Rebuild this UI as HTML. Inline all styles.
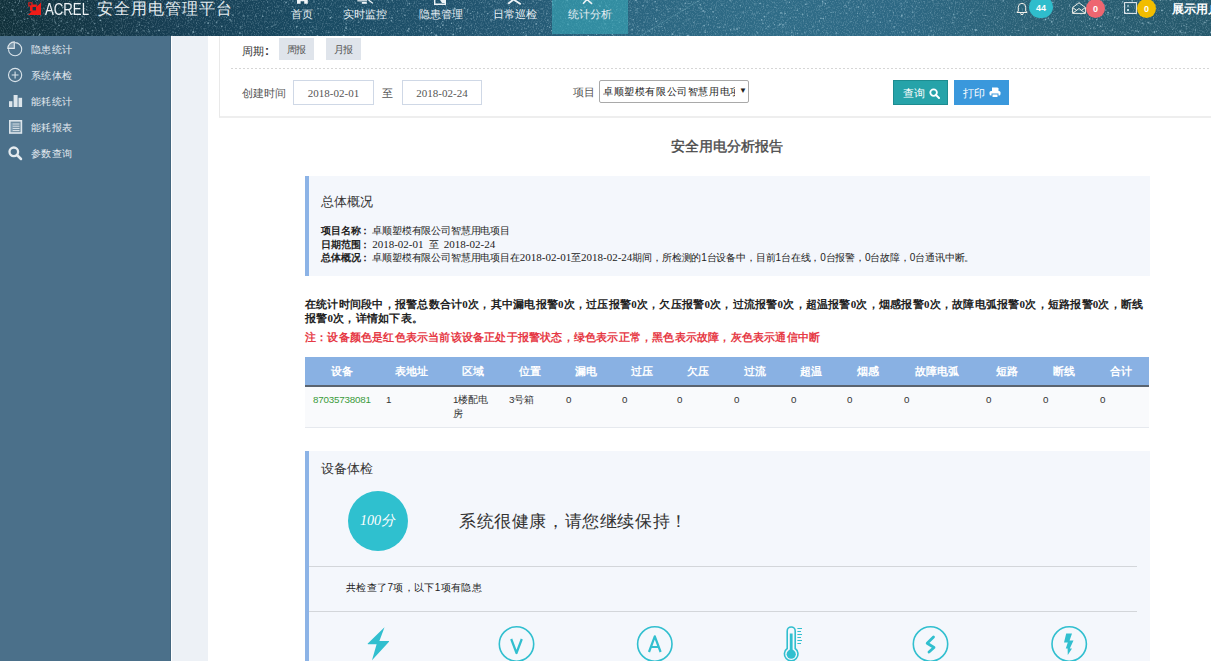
<!DOCTYPE html>
<html><head><meta charset="utf-8">
<style>
*{margin:0;padding:0;box-sizing:border-box}
html,body{width:1211px;height:661px;overflow:hidden;background:#fff;font-family:"Liberation Sans",sans-serif;color:#333}
.abs{position:absolute}
#hdr{position:absolute;z-index:5;left:0;top:0;width:1211px;height:36px;overflow:hidden;
 background:linear-gradient(90deg,#10303a 0px,#133645 80px,#163d52 165px,#194a62 315px,#21546f 475px,#2b6681 650px,#2f6c87 780px,#2d6884 900px,#295f74 1040px,#25586b 1211px)}
#side{position:absolute;left:0;top:36px;width:171px;height:625px;background:#4b708a;border-right:1px solid #44677f}
#gap{position:absolute;left:172px;top:36px;width:36px;height:625px;background:#edf1f6}
.nav{position:absolute;top:7px;font-size:11px;color:#e6eef3;white-space:nowrap;line-height:14px}
.sitem{position:absolute;left:31px;font-size:10px;letter-spacing:0.45px;color:#e3eaf0;line-height:14px;white-space:nowrap}
.sico{position:absolute;left:8px}
.t{position:absolute;white-space:nowrap}
.dg{font-family:"Liberation Serif",serif;font-size:11px;letter-spacing:0}
</style></head><body>
<div id="hdr">
  <svg class="abs" style="left:0;top:0" width="1211" height="36"><filter id="nz" x="0" y="0" width="100%" height="100%"><feTurbulence type="fractalNoise" baseFrequency="0.9 0.6" numOctaves="2" seed="3"/><feColorMatrix values="0 0 0 0 0.75  0 0 0 0 0.88  0 0 0 0 0.95  0 0 0 1.6 -0.75"/></filter><rect width="1211" height="36" filter="url(#nz)" opacity="0.4"/><g fill="#c6e6f2"><circle cx="547.8" cy="20.2" r="0.9" fill-opacity="0.35"/><circle cx="1035.5" cy="6.8" r="0.9" fill-opacity="0.43"/><circle cx="960.3" cy="3.4" r="0.6" fill-opacity="0.21"/><circle cx="652.4" cy="32.1" r="0.4" fill-opacity="0.42"/><circle cx="479.7" cy="16.3" r="0.5" fill-opacity="0.43"/><circle cx="1007.2" cy="2.3" r="0.4" fill-opacity="0.24"/><circle cx="293.0" cy="1.1" r="0.9" fill-opacity="0.30"/><circle cx="715.7" cy="7.0" r="0.6" fill-opacity="0.44"/><circle cx="605.2" cy="23.8" r="0.9" fill-opacity="0.44"/><circle cx="492.6" cy="19.8" r="0.5" fill-opacity="0.47"/><circle cx="381.8" cy="8.3" r="0.6" fill-opacity="0.16"/><circle cx="682.0" cy="3.9" r="0.5" fill-opacity="0.53"/><circle cx="468.1" cy="34.5" r="0.4" fill-opacity="0.25"/><circle cx="1122.6" cy="1.9" r="0.8" fill-opacity="0.59"/><circle cx="481.3" cy="2.6" r="0.6" fill-opacity="0.50"/><circle cx="326.7" cy="3.1" r="0.7" fill-opacity="0.16"/><circle cx="496.6" cy="33.2" r="0.5" fill-opacity="0.26"/><circle cx="122.4" cy="2.2" r="0.9" fill-opacity="0.23"/><circle cx="677.3" cy="16.1" r="0.6" fill-opacity="0.59"/><circle cx="931.9" cy="15.1" r="0.8" fill-opacity="0.20"/><circle cx="509.5" cy="7.7" r="0.6" fill-opacity="0.54"/><circle cx="1180.6" cy="21.3" r="0.4" fill-opacity="0.24"/><circle cx="477.5" cy="30.8" r="0.5" fill-opacity="0.17"/><circle cx="177.2" cy="15.9" r="0.4" fill-opacity="0.50"/><circle cx="398.4" cy="10.7" r="0.5" fill-opacity="0.18"/><circle cx="252.8" cy="22.9" r="0.4" fill-opacity="0.42"/><circle cx="450.1" cy="16.3" r="0.9" fill-opacity="0.52"/><circle cx="164.4" cy="13.9" r="0.5" fill-opacity="0.29"/><circle cx="276.6" cy="22.0" r="0.6" fill-opacity="0.22"/><circle cx="761.7" cy="19.9" r="0.8" fill-opacity="0.55"/><circle cx="730.9" cy="15.2" r="0.5" fill-opacity="0.20"/><circle cx="620.5" cy="9.2" r="0.8" fill-opacity="0.27"/><circle cx="997.5" cy="21.5" r="0.6" fill-opacity="0.38"/><circle cx="1125.3" cy="35.2" r="0.5" fill-opacity="0.25"/><circle cx="677.4" cy="30.7" r="0.5" fill-opacity="0.28"/><circle cx="1110.9" cy="7.3" r="0.4" fill-opacity="0.18"/><circle cx="498.2" cy="9.0" r="0.4" fill-opacity="0.23"/><circle cx="446.6" cy="20.6" r="0.5" fill-opacity="0.19"/><circle cx="167.6" cy="16.2" r="0.7" fill-opacity="0.45"/><circle cx="837.1" cy="21.0" r="0.5" fill-opacity="0.42"/><circle cx="1118.5" cy="17.1" r="0.7" fill-opacity="0.47"/><circle cx="1165.9" cy="0.8" r="0.5" fill-opacity="0.37"/><circle cx="884.6" cy="11.5" r="0.5" fill-opacity="0.18"/><circle cx="661.3" cy="26.5" r="0.5" fill-opacity="0.51"/><circle cx="1108.1" cy="12.7" r="0.9" fill-opacity="0.56"/><circle cx="1054.9" cy="15.0" r="0.4" fill-opacity="0.54"/><circle cx="693.7" cy="22.5" r="0.8" fill-opacity="0.32"/><circle cx="15.1" cy="2.6" r="0.5" fill-opacity="0.44"/><circle cx="1202.9" cy="31.7" r="0.7" fill-opacity="0.32"/><circle cx="890.1" cy="20.9" r="0.9" fill-opacity="0.36"/><circle cx="655.5" cy="18.7" r="0.4" fill-opacity="0.29"/><circle cx="106.2" cy="0.8" r="0.5" fill-opacity="0.37"/><circle cx="744.2" cy="33.1" r="0.6" fill-opacity="0.55"/><circle cx="445.6" cy="5.2" r="0.6" fill-opacity="0.38"/><circle cx="912.8" cy="12.3" r="0.9" fill-opacity="0.37"/><circle cx="292.4" cy="14.6" r="0.6" fill-opacity="0.24"/><circle cx="521.8" cy="29.0" r="0.6" fill-opacity="0.55"/><circle cx="465.5" cy="21.0" r="0.7" fill-opacity="0.24"/><circle cx="162.9" cy="12.6" r="0.4" fill-opacity="0.47"/><circle cx="1150.5" cy="10.0" r="0.5" fill-opacity="0.20"/><circle cx="570.8" cy="33.3" r="0.8" fill-opacity="0.32"/><circle cx="629.7" cy="24.2" r="0.9" fill-opacity="0.29"/><circle cx="1003.6" cy="10.0" r="0.4" fill-opacity="0.46"/><circle cx="340.4" cy="12.8" r="0.4" fill-opacity="0.44"/><circle cx="490.7" cy="6.8" r="0.6" fill-opacity="0.26"/><circle cx="170.6" cy="1.7" r="0.5" fill-opacity="0.35"/><circle cx="762.9" cy="23.6" r="0.7" fill-opacity="0.58"/><circle cx="828.9" cy="7.2" r="0.9" fill-opacity="0.27"/><circle cx="864.9" cy="27.2" r="0.4" fill-opacity="0.23"/><circle cx="329.8" cy="12.4" r="0.5" fill-opacity="0.33"/><circle cx="959.0" cy="32.6" r="0.5" fill-opacity="0.33"/><circle cx="1081.0" cy="14.0" r="0.9" fill-opacity="0.35"/><circle cx="757.5" cy="32.8" r="0.8" fill-opacity="0.40"/><circle cx="790.4" cy="18.1" r="0.7" fill-opacity="0.36"/><circle cx="788.8" cy="7.4" r="0.5" fill-opacity="0.25"/><circle cx="1089.9" cy="35.3" r="0.6" fill-opacity="0.39"/><circle cx="957.6" cy="11.5" r="0.4" fill-opacity="0.31"/><circle cx="100.2" cy="15.9" r="0.8" fill-opacity="0.50"/><circle cx="590.3" cy="1.0" r="0.5" fill-opacity="0.34"/><circle cx="42.5" cy="19.2" r="0.5" fill-opacity="0.36"/><circle cx="1210.8" cy="32.4" r="0.9" fill-opacity="0.58"/><circle cx="596.5" cy="34.2" r="0.5" fill-opacity="0.49"/><circle cx="532.1" cy="20.1" r="0.5" fill-opacity="0.39"/><circle cx="1021.6" cy="20.2" r="0.6" fill-opacity="0.45"/><circle cx="1156.2" cy="31.3" r="0.6" fill-opacity="0.29"/><circle cx="170.9" cy="19.6" r="0.6" fill-opacity="0.41"/><circle cx="243.4" cy="19.3" r="0.4" fill-opacity="0.42"/><circle cx="33.6" cy="34.9" r="0.8" fill-opacity="0.39"/><circle cx="1198.2" cy="4.4" r="0.5" fill-opacity="0.46"/><circle cx="79.8" cy="19.4" r="0.8" fill-opacity="0.56"/><circle cx="969.3" cy="14.5" r="0.6" fill-opacity="0.36"/><circle cx="153.8" cy="15.6" r="0.9" fill-opacity="0.39"/><circle cx="131.5" cy="15.1" r="0.4" fill-opacity="0.57"/><circle cx="156.8" cy="28.1" r="0.4" fill-opacity="0.17"/><circle cx="188.3" cy="0.4" r="0.6" fill-opacity="0.29"/><circle cx="430.3" cy="22.3" r="0.5" fill-opacity="0.37"/><circle cx="705.1" cy="30.7" r="0.6" fill-opacity="0.47"/><circle cx="849.4" cy="31.6" r="0.4" fill-opacity="0.32"/><circle cx="500.6" cy="19.1" r="0.5" fill-opacity="0.39"/><circle cx="1046.1" cy="19.2" r="0.6" fill-opacity="0.39"/><circle cx="1030.9" cy="22.0" r="0.5" fill-opacity="0.25"/><circle cx="897.1" cy="29.2" r="0.5" fill-opacity="0.29"/><circle cx="381.5" cy="33.2" r="0.6" fill-opacity="0.50"/><circle cx="235.6" cy="3.5" r="0.6" fill-opacity="0.21"/><circle cx="106.7" cy="14.0" r="0.8" fill-opacity="0.52"/><circle cx="510.6" cy="28.4" r="0.5" fill-opacity="0.24"/><circle cx="760.5" cy="28.8" r="0.5" fill-opacity="0.24"/><circle cx="826.4" cy="32.8" r="0.7" fill-opacity="0.20"/><circle cx="612.4" cy="27.3" r="0.6" fill-opacity="0.51"/><circle cx="583.8" cy="0.9" r="0.9" fill-opacity="0.22"/><circle cx="223.5" cy="7.3" r="0.5" fill-opacity="0.60"/><circle cx="1122.5" cy="3.4" r="0.4" fill-opacity="0.21"/><circle cx="824.6" cy="2.8" r="0.5" fill-opacity="0.30"/><circle cx="565.5" cy="18.6" r="0.8" fill-opacity="0.24"/><circle cx="451.9" cy="22.8" r="0.4" fill-opacity="0.53"/><circle cx="219.5" cy="16.3" r="0.7" fill-opacity="0.33"/><circle cx="236.3" cy="5.9" r="0.4" fill-opacity="0.30"/><circle cx="102.7" cy="30.3" r="0.8" fill-opacity="0.41"/><circle cx="231.2" cy="21.0" r="0.7" fill-opacity="0.51"/><circle cx="312.8" cy="32.8" r="0.5" fill-opacity="0.52"/><circle cx="491.2" cy="32.3" r="0.7" fill-opacity="0.50"/><circle cx="926.7" cy="14.6" r="0.5" fill-opacity="0.18"/><circle cx="413.8" cy="16.9" r="0.4" fill-opacity="0.55"/><circle cx="1199.6" cy="32.5" r="0.4" fill-opacity="0.25"/><circle cx="1144.0" cy="24.0" r="0.7" fill-opacity="0.25"/><circle cx="491.8" cy="6.6" r="0.5" fill-opacity="0.33"/><circle cx="1210.9" cy="23.1" r="0.5" fill-opacity="0.49"/><circle cx="1186.9" cy="0.8" r="0.5" fill-opacity="0.48"/><circle cx="310.8" cy="14.5" r="0.4" fill-opacity="0.49"/><circle cx="784.7" cy="0.4" r="0.6" fill-opacity="0.26"/><circle cx="1096.7" cy="19.8" r="0.8" fill-opacity="0.59"/><circle cx="687.8" cy="35.8" r="0.9" fill-opacity="0.51"/><circle cx="92.3" cy="21.5" r="0.4" fill-opacity="0.32"/><circle cx="1136.6" cy="13.9" r="0.5" fill-opacity="0.54"/><circle cx="656.3" cy="21.5" r="0.8" fill-opacity="0.58"/><circle cx="509.5" cy="19.0" r="0.6" fill-opacity="0.31"/><circle cx="346.0" cy="23.6" r="0.6" fill-opacity="0.45"/><circle cx="905.5" cy="1.0" r="0.6" fill-opacity="0.41"/><circle cx="766.6" cy="14.7" r="0.8" fill-opacity="0.17"/><circle cx="381.6" cy="14.3" r="0.7" fill-opacity="0.18"/><circle cx="1096.6" cy="15.5" r="0.9" fill-opacity="0.26"/><circle cx="914.9" cy="1.6" r="0.5" fill-opacity="0.57"/><circle cx="875.2" cy="16.9" r="0.6" fill-opacity="0.42"/><circle cx="139.4" cy="22.5" r="0.9" fill-opacity="0.20"/><circle cx="1042.8" cy="12.8" r="0.5" fill-opacity="0.21"/><circle cx="536.3" cy="24.0" r="0.9" fill-opacity="0.42"/><circle cx="774.5" cy="24.6" r="0.7" fill-opacity="0.50"/><circle cx="642.8" cy="35.9" r="0.6" fill-opacity="0.48"/><circle cx="288.7" cy="4.1" r="0.6" fill-opacity="0.50"/><circle cx="756.8" cy="12.9" r="0.6" fill-opacity="0.42"/><circle cx="878.1" cy="25.2" r="0.6" fill-opacity="0.43"/><circle cx="912.3" cy="6.8" r="0.6" fill-opacity="0.38"/><circle cx="790.7" cy="7.1" r="0.4" fill-opacity="0.43"/><circle cx="11.5" cy="9.3" r="0.4" fill-opacity="0.43"/><circle cx="124.1" cy="19.5" r="0.5" fill-opacity="0.49"/><circle cx="1105.5" cy="5.8" r="0.6" fill-opacity="0.43"/><circle cx="451.9" cy="17.2" r="0.6" fill-opacity="0.30"/><circle cx="598.7" cy="4.8" r="0.5" fill-opacity="0.51"/><circle cx="541.7" cy="29.6" r="0.6" fill-opacity="0.35"/><circle cx="905.0" cy="14.0" r="0.5" fill-opacity="0.32"/><circle cx="791.6" cy="35.6" r="0.7" fill-opacity="0.28"/><circle cx="919.1" cy="29.7" r="0.5" fill-opacity="0.34"/><circle cx="447.2" cy="3.5" r="0.7" fill-opacity="0.19"/><circle cx="100.5" cy="20.3" r="0.9" fill-opacity="0.52"/><circle cx="561.3" cy="29.6" r="0.4" fill-opacity="0.18"/><circle cx="258.3" cy="23.8" r="0.5" fill-opacity="0.46"/><circle cx="599.2" cy="27.5" r="0.7" fill-opacity="0.28"/><circle cx="173.1" cy="12.9" r="0.7" fill-opacity="0.31"/><circle cx="142.1" cy="25.5" r="0.6" fill-opacity="0.35"/><circle cx="972.5" cy="11.0" r="0.7" fill-opacity="0.25"/><circle cx="1172.0" cy="26.3" r="0.6" fill-opacity="0.19"/><circle cx="1003.3" cy="0.9" r="0.8" fill-opacity="0.41"/><circle cx="964.1" cy="26.6" r="0.7" fill-opacity="0.51"/><circle cx="654.6" cy="30.1" r="0.5" fill-opacity="0.23"/><circle cx="919.1" cy="31.7" r="0.6" fill-opacity="0.52"/><circle cx="267.9" cy="2.1" r="0.5" fill-opacity="0.41"/><circle cx="1170.3" cy="23.4" r="0.8" fill-opacity="0.18"/><circle cx="662.2" cy="28.4" r="0.5" fill-opacity="0.30"/><circle cx="331.4" cy="3.8" r="0.7" fill-opacity="0.19"/><circle cx="767.9" cy="5.2" r="0.8" fill-opacity="0.26"/><circle cx="267.0" cy="27.6" r="0.7" fill-opacity="0.49"/><circle cx="477.6" cy="12.2" r="0.7" fill-opacity="0.45"/><circle cx="597.8" cy="19.3" r="0.5" fill-opacity="0.47"/><circle cx="1108.0" cy="14.8" r="0.7" fill-opacity="0.53"/><circle cx="976.0" cy="30.0" r="0.9" fill-opacity="0.58"/><circle cx="775.4" cy="18.9" r="0.4" fill-opacity="0.51"/><circle cx="510.6" cy="15.1" r="0.5" fill-opacity="0.26"/><circle cx="196.5" cy="22.9" r="0.5" fill-opacity="0.29"/><circle cx="471.5" cy="19.0" r="0.6" fill-opacity="0.59"/><circle cx="71.7" cy="11.1" r="0.5" fill-opacity="0.29"/><circle cx="188.3" cy="33.1" r="0.4" fill-opacity="0.49"/><circle cx="20.8" cy="17.3" r="0.4" fill-opacity="0.29"/><circle cx="239.3" cy="12.9" r="0.6" fill-opacity="0.42"/><circle cx="571.5" cy="18.3" r="0.9" fill-opacity="0.23"/><circle cx="340.4" cy="6.2" r="0.6" fill-opacity="0.43"/><circle cx="1140.8" cy="19.8" r="0.6" fill-opacity="0.37"/><circle cx="487.6" cy="34.4" r="0.5" fill-opacity="0.37"/><circle cx="267.6" cy="1.8" r="0.5" fill-opacity="0.51"/><circle cx="466.2" cy="19.0" r="0.6" fill-opacity="0.50"/><circle cx="70.2" cy="33.3" r="0.4" fill-opacity="0.54"/><circle cx="1096.2" cy="16.2" r="0.6" fill-opacity="0.47"/><circle cx="734.0" cy="5.7" r="0.5" fill-opacity="0.50"/><circle cx="175.3" cy="32.7" r="0.5" fill-opacity="0.44"/><circle cx="1202.7" cy="9.6" r="0.4" fill-opacity="0.22"/><circle cx="932.9" cy="0.0" r="0.5" fill-opacity="0.52"/><circle cx="99.8" cy="9.7" r="0.5" fill-opacity="0.55"/><circle cx="840.1" cy="3.0" r="0.6" fill-opacity="0.16"/><circle cx="227.4" cy="7.0" r="0.5" fill-opacity="0.50"/><circle cx="533.1" cy="1.3" r="0.8" fill-opacity="0.39"/><circle cx="190.8" cy="30.0" r="0.6" fill-opacity="0.29"/><circle cx="491.0" cy="20.0" r="0.9" fill-opacity="0.45"/><circle cx="81.2" cy="2.7" r="0.5" fill-opacity="0.20"/><circle cx="477.4" cy="16.6" r="0.5" fill-opacity="0.44"/><circle cx="15.0" cy="13.6" r="0.9" fill-opacity="0.26"/><circle cx="683.1" cy="16.5" r="0.4" fill-opacity="0.54"/><circle cx="1022.7" cy="25.9" r="0.5" fill-opacity="0.28"/><circle cx="455.3" cy="19.4" r="0.6" fill-opacity="0.58"/><circle cx="914.2" cy="20.0" r="0.5" fill-opacity="0.27"/><circle cx="242.1" cy="26.3" r="0.7" fill-opacity="0.29"/><circle cx="331.6" cy="16.9" r="0.7" fill-opacity="0.35"/><circle cx="463.1" cy="3.7" r="0.5" fill-opacity="0.21"/><circle cx="763.4" cy="6.5" r="0.6" fill-opacity="0.33"/><circle cx="1013.5" cy="21.3" r="0.5" fill-opacity="0.20"/><circle cx="39.2" cy="35.5" r="0.8" fill-opacity="0.33"/><circle cx="88.0" cy="33.1" r="0.8" fill-opacity="0.57"/><circle cx="168.4" cy="7.4" r="0.5" fill-opacity="0.52"/><circle cx="467.4" cy="11.9" r="0.8" fill-opacity="0.43"/><circle cx="880.3" cy="22.1" r="0.7" fill-opacity="0.59"/><circle cx="956.3" cy="23.8" r="0.4" fill-opacity="0.27"/><circle cx="228.6" cy="11.0" r="0.9" fill-opacity="0.20"/><circle cx="457.3" cy="18.3" r="0.6" fill-opacity="0.52"/><circle cx="740.5" cy="5.7" r="0.6" fill-opacity="0.40"/><circle cx="427.0" cy="18.0" r="0.5" fill-opacity="0.41"/><circle cx="240.0" cy="33.6" r="0.6" fill-opacity="0.41"/><circle cx="32.3" cy="23.7" r="0.5" fill-opacity="0.21"/><circle cx="578.7" cy="15.0" r="0.7" fill-opacity="0.30"/><circle cx="1125.1" cy="13.0" r="0.9" fill-opacity="0.55"/><circle cx="547.7" cy="26.3" r="0.6" fill-opacity="0.56"/><circle cx="658.1" cy="20.2" r="0.6" fill-opacity="0.23"/><circle cx="903.1" cy="32.3" r="0.7" fill-opacity="0.42"/><circle cx="148.5" cy="29.7" r="0.6" fill-opacity="0.46"/><circle cx="440.4" cy="27.3" r="0.7" fill-opacity="0.52"/><circle cx="224.7" cy="19.7" r="0.5" fill-opacity="0.35"/><circle cx="488.5" cy="28.2" r="0.5" fill-opacity="0.29"/><circle cx="812.9" cy="26.6" r="0.8" fill-opacity="0.43"/><circle cx="775.4" cy="27.5" r="0.5" fill-opacity="0.24"/><circle cx="566.8" cy="5.1" r="0.8" fill-opacity="0.20"/><circle cx="491.3" cy="12.1" r="0.5" fill-opacity="0.27"/><circle cx="687.9" cy="12.0" r="0.4" fill-opacity="0.47"/><circle cx="953.7" cy="14.5" r="0.9" fill-opacity="0.42"/><circle cx="569.1" cy="14.8" r="0.8" fill-opacity="0.49"/><circle cx="588.3" cy="35.8" r="0.8" fill-opacity="0.52"/><circle cx="142.1" cy="4.1" r="0.7" fill-opacity="0.39"/><circle cx="523.4" cy="32.6" r="0.7" fill-opacity="0.56"/><circle cx="358.5" cy="22.2" r="0.8" fill-opacity="0.48"/><circle cx="723.6" cy="27.1" r="0.6" fill-opacity="0.55"/><circle cx="1062.1" cy="8.8" r="0.9" fill-opacity="0.26"/><circle cx="1057.3" cy="35.0" r="0.9" fill-opacity="0.46"/><circle cx="637.3" cy="8.6" r="0.6" fill-opacity="0.45"/><circle cx="1138.6" cy="31.7" r="0.7" fill-opacity="0.54"/><circle cx="510.3" cy="29.0" r="0.6" fill-opacity="0.44"/><circle cx="510.5" cy="4.4" r="0.5" fill-opacity="0.19"/><circle cx="959.5" cy="4.5" r="0.9" fill-opacity="0.15"/><circle cx="295.4" cy="10.8" r="0.7" fill-opacity="0.23"/><circle cx="533.8" cy="16.2" r="0.8" fill-opacity="0.21"/><circle cx="838.3" cy="8.3" r="0.6" fill-opacity="0.16"/><circle cx="1088.1" cy="11.1" r="0.9" fill-opacity="0.21"/><circle cx="940.5" cy="28.0" r="0.6" fill-opacity="0.24"/><circle cx="1040.3" cy="24.9" r="0.4" fill-opacity="0.24"/><circle cx="1014.7" cy="12.7" r="0.9" fill-opacity="0.16"/><circle cx="769.4" cy="25.1" r="0.6" fill-opacity="0.39"/><circle cx="286.1" cy="34.2" r="0.4" fill-opacity="0.44"/><circle cx="370.7" cy="29.4" r="0.6" fill-opacity="0.54"/><circle cx="863.6" cy="4.9" r="0.9" fill-opacity="0.34"/><circle cx="205.1" cy="31.0" r="0.5" fill-opacity="0.47"/><circle cx="237.9" cy="6.5" r="0.6" fill-opacity="0.38"/><circle cx="357.8" cy="9.8" r="0.5" fill-opacity="0.42"/><circle cx="277.3" cy="10.8" r="0.5" fill-opacity="0.45"/><circle cx="335.2" cy="23.0" r="0.5" fill-opacity="0.36"/><circle cx="92.3" cy="33.0" r="0.5" fill-opacity="0.39"/><circle cx="54.9" cy="21.6" r="0.6" fill-opacity="0.39"/><circle cx="512.8" cy="20.5" r="0.5" fill-opacity="0.28"/><circle cx="915.1" cy="8.9" r="0.6" fill-opacity="0.48"/><circle cx="34.9" cy="28.5" r="0.5" fill-opacity="0.59"/><circle cx="40.7" cy="16.6" r="0.8" fill-opacity="0.15"/><circle cx="1079.7" cy="2.2" r="0.5" fill-opacity="0.40"/><circle cx="781.1" cy="12.9" r="0.9" fill-opacity="0.50"/><circle cx="625.8" cy="18.2" r="0.5" fill-opacity="0.42"/><circle cx="934.0" cy="4.0" r="0.8" fill-opacity="0.26"/><circle cx="533.4" cy="27.8" r="0.6" fill-opacity="0.27"/><circle cx="659.0" cy="30.7" r="0.9" fill-opacity="0.27"/><circle cx="245.2" cy="34.9" r="0.4" fill-opacity="0.41"/><circle cx="1057.1" cy="6.5" r="0.5" fill-opacity="0.42"/><circle cx="737.0" cy="29.0" r="0.9" fill-opacity="0.48"/><circle cx="1037.4" cy="1.1" r="0.5" fill-opacity="0.56"/><circle cx="688.9" cy="19.6" r="0.6" fill-opacity="0.43"/><circle cx="65.4" cy="15.3" r="0.7" fill-opacity="0.52"/><circle cx="894.3" cy="28.1" r="0.9" fill-opacity="0.19"/><circle cx="993.7" cy="6.2" r="0.6" fill-opacity="0.26"/><circle cx="601.7" cy="23.7" r="0.9" fill-opacity="0.18"/><circle cx="497.3" cy="13.1" r="0.6" fill-opacity="0.47"/><circle cx="1159.2" cy="4.6" r="0.5" fill-opacity="0.22"/><circle cx="551.4" cy="26.8" r="0.4" fill-opacity="0.15"/><circle cx="496.3" cy="18.9" r="0.5" fill-opacity="0.33"/><circle cx="361.0" cy="15.3" r="0.5" fill-opacity="0.59"/><circle cx="823.3" cy="25.8" r="0.6" fill-opacity="0.28"/><circle cx="143.9" cy="30.8" r="0.8" fill-opacity="0.36"/><circle cx="1129.2" cy="13.1" r="0.7" fill-opacity="0.58"/><circle cx="1118.0" cy="7.9" r="0.5" fill-opacity="0.33"/><circle cx="786.9" cy="2.1" r="0.7" fill-opacity="0.41"/><circle cx="1104.4" cy="31.8" r="0.5" fill-opacity="0.36"/><circle cx="475.8" cy="30.3" r="0.8" fill-opacity="0.32"/><circle cx="59.6" cy="15.1" r="0.6" fill-opacity="0.23"/><circle cx="665.5" cy="5.9" r="0.6" fill-opacity="0.33"/><circle cx="719.2" cy="27.3" r="0.9" fill-opacity="0.35"/><circle cx="1202.9" cy="24.5" r="0.9" fill-opacity="0.24"/><circle cx="463.8" cy="2.6" r="0.6" fill-opacity="0.31"/><circle cx="332.4" cy="0.7" r="0.5" fill-opacity="0.48"/><circle cx="620.2" cy="20.4" r="0.6" fill-opacity="0.27"/><circle cx="437.3" cy="5.5" r="0.7" fill-opacity="0.21"/><circle cx="291.7" cy="30.2" r="0.5" fill-opacity="0.16"/><circle cx="390.0" cy="13.8" r="0.5" fill-opacity="0.53"/><circle cx="461.8" cy="9.2" r="0.4" fill-opacity="0.29"/><circle cx="736.2" cy="17.6" r="0.6" fill-opacity="0.22"/><circle cx="721.0" cy="1.1" r="0.6" fill-opacity="0.33"/><circle cx="579.6" cy="25.0" r="0.6" fill-opacity="0.29"/><circle cx="547.0" cy="13.6" r="0.6" fill-opacity="0.53"/><circle cx="647.9" cy="16.2" r="0.5" fill-opacity="0.32"/><circle cx="1048.7" cy="8.1" r="0.6" fill-opacity="0.32"/><circle cx="740.3" cy="5.1" r="0.4" fill-opacity="0.49"/><circle cx="584.7" cy="0.4" r="0.6" fill-opacity="0.45"/><circle cx="81.0" cy="30.7" r="0.7" fill-opacity="0.45"/><circle cx="1156.7" cy="31.3" r="0.6" fill-opacity="0.50"/><circle cx="314.4" cy="28.8" r="0.5" fill-opacity="0.33"/><circle cx="72.8" cy="13.8" r="0.7" fill-opacity="0.28"/><circle cx="851.7" cy="8.0" r="0.8" fill-opacity="0.24"/><circle cx="930.4" cy="12.6" r="0.6" fill-opacity="0.38"/><circle cx="899.5" cy="32.7" r="0.5" fill-opacity="0.37"/><circle cx="311.2" cy="30.7" r="0.6" fill-opacity="0.47"/><circle cx="27.9" cy="14.1" r="0.7" fill-opacity="0.56"/><circle cx="1104.9" cy="9.8" r="0.8" fill-opacity="0.37"/><circle cx="709.5" cy="16.9" r="0.7" fill-opacity="0.55"/><circle cx="87.5" cy="1.3" r="0.7" fill-opacity="0.55"/><circle cx="685.1" cy="9.4" r="0.5" fill-opacity="0.44"/><circle cx="465.5" cy="12.3" r="0.7" fill-opacity="0.16"/><circle cx="856.5" cy="7.8" r="0.5" fill-opacity="0.43"/><circle cx="751.8" cy="14.8" r="0.8" fill-opacity="0.18"/><circle cx="82.8" cy="16.7" r="0.9" fill-opacity="0.32"/><circle cx="1101.5" cy="1.4" r="0.5" fill-opacity="0.46"/><circle cx="330.4" cy="17.8" r="0.9" fill-opacity="0.59"/><circle cx="181.5" cy="6.9" r="0.6" fill-opacity="0.27"/><circle cx="266.5" cy="18.7" r="0.8" fill-opacity="0.15"/><circle cx="662.4" cy="30.6" r="0.5" fill-opacity="0.43"/><circle cx="679.1" cy="29.9" r="0.7" fill-opacity="0.27"/><circle cx="125.8" cy="0.7" r="0.6" fill-opacity="0.46"/><circle cx="831.4" cy="34.7" r="0.5" fill-opacity="0.22"/><circle cx="752.8" cy="17.7" r="0.6" fill-opacity="0.32"/><circle cx="346.0" cy="27.0" r="0.9" fill-opacity="0.26"/><circle cx="301.9" cy="11.7" r="0.5" fill-opacity="0.56"/><circle cx="893.1" cy="31.6" r="0.5" fill-opacity="0.52"/><circle cx="1072.5" cy="11.2" r="0.9" fill-opacity="0.38"/><circle cx="822.6" cy="1.5" r="0.8" fill-opacity="0.54"/><circle cx="64.7" cy="9.1" r="0.8" fill-opacity="0.26"/><circle cx="768.7" cy="13.2" r="0.7" fill-opacity="0.23"/><circle cx="1036.7" cy="7.4" r="0.5" fill-opacity="0.41"/><circle cx="509.3" cy="25.4" r="0.6" fill-opacity="0.51"/><circle cx="151.6" cy="13.6" r="0.6" fill-opacity="0.25"/><circle cx="223.6" cy="0.5" r="0.5" fill-opacity="0.27"/><circle cx="328.3" cy="9.1" r="0.8" fill-opacity="0.32"/><circle cx="822.6" cy="5.0" r="0.5" fill-opacity="0.47"/><circle cx="143.4" cy="1.5" r="0.6" fill-opacity="0.31"/><circle cx="652.1" cy="28.9" r="0.8" fill-opacity="0.30"/><circle cx="32.1" cy="19.5" r="0.9" fill-opacity="0.23"/><circle cx="81.6" cy="15.8" r="0.6" fill-opacity="0.25"/><circle cx="874.2" cy="14.7" r="0.5" fill-opacity="0.59"/><circle cx="471.5" cy="25.0" r="0.6" fill-opacity="0.51"/><circle cx="177.9" cy="6.3" r="0.5" fill-opacity="0.40"/><circle cx="1085.9" cy="31.7" r="0.8" fill-opacity="0.20"/><circle cx="391.9" cy="0.7" r="0.5" fill-opacity="0.27"/><circle cx="484.6" cy="11.6" r="0.5" fill-opacity="0.37"/><circle cx="443.0" cy="9.3" r="0.4" fill-opacity="0.22"/><circle cx="8.6" cy="27.4" r="0.5" fill-opacity="0.15"/><circle cx="407.3" cy="5.0" r="0.6" fill-opacity="0.60"/><circle cx="494.8" cy="1.2" r="0.7" fill-opacity="0.51"/><circle cx="479.5" cy="2.1" r="0.6" fill-opacity="0.27"/><circle cx="1137.0" cy="31.1" r="0.9" fill-opacity="0.41"/><circle cx="1139.3" cy="1.7" r="0.4" fill-opacity="0.58"/><circle cx="652.7" cy="24.3" r="0.6" fill-opacity="0.31"/><circle cx="912.6" cy="11.2" r="0.9" fill-opacity="0.15"/><circle cx="254.5" cy="34.5" r="0.4" fill-opacity="0.50"/><circle cx="320.8" cy="8.8" r="0.9" fill-opacity="0.33"/><circle cx="972.5" cy="29.8" r="0.5" fill-opacity="0.57"/><circle cx="583.8" cy="30.2" r="0.8" fill-opacity="0.26"/><circle cx="1101.6" cy="0.8" r="0.5" fill-opacity="0.25"/><circle cx="470.4" cy="13.3" r="0.6" fill-opacity="0.51"/><circle cx="441.6" cy="23.0" r="0.7" fill-opacity="0.29"/><circle cx="80.7" cy="23.5" r="0.5" fill-opacity="0.27"/><circle cx="258.7" cy="6.5" r="0.4" fill-opacity="0.48"/><circle cx="661.5" cy="24.5" r="0.5" fill-opacity="0.31"/><circle cx="188.4" cy="13.4" r="0.5" fill-opacity="0.34"/><circle cx="11.4" cy="18.1" r="0.8" fill-opacity="0.19"/><circle cx="1151.2" cy="30.2" r="0.6" fill-opacity="0.16"/><circle cx="211.4" cy="2.4" r="0.5" fill-opacity="0.41"/><circle cx="389.4" cy="17.0" r="0.6" fill-opacity="0.37"/><circle cx="945.1" cy="32.0" r="0.6" fill-opacity="0.18"/><circle cx="472.4" cy="33.2" r="0.5" fill-opacity="0.50"/><circle cx="635.9" cy="0.4" r="0.8" fill-opacity="0.56"/><circle cx="67.0" cy="22.2" r="0.7" fill-opacity="0.55"/><circle cx="1037.0" cy="22.6" r="0.5" fill-opacity="0.20"/><circle cx="894.5" cy="26.8" r="0.8" fill-opacity="0.45"/><circle cx="507.9" cy="13.8" r="0.6" fill-opacity="0.32"/><circle cx="655.4" cy="1.5" r="0.4" fill-opacity="0.39"/><circle cx="547.0" cy="10.2" r="0.4" fill-opacity="0.42"/><circle cx="1128.2" cy="5.5" r="0.9" fill-opacity="0.30"/><circle cx="310.0" cy="22.4" r="0.6" fill-opacity="0.48"/><circle cx="1198.2" cy="14.5" r="0.5" fill-opacity="0.49"/><circle cx="1086.7" cy="4.0" r="0.5" fill-opacity="0.53"/><circle cx="786.2" cy="33.8" r="0.5" fill-opacity="0.51"/><circle cx="619.6" cy="35.8" r="0.5" fill-opacity="0.23"/><circle cx="46.4" cy="12.3" r="0.7" fill-opacity="0.35"/><circle cx="649.5" cy="31.2" r="0.6" fill-opacity="0.37"/><circle cx="1164.7" cy="8.6" r="0.5" fill-opacity="0.40"/><circle cx="953.2" cy="17.7" r="0.6" fill-opacity="0.18"/><circle cx="601.4" cy="2.0" r="0.5" fill-opacity="0.51"/><circle cx="183.8" cy="13.2" r="0.5" fill-opacity="0.30"/><circle cx="1124.8" cy="34.4" r="0.6" fill-opacity="0.53"/><circle cx="142.2" cy="6.5" r="0.8" fill-opacity="0.16"/><circle cx="825.8" cy="16.8" r="0.9" fill-opacity="0.18"/><circle cx="1196.3" cy="7.4" r="0.7" fill-opacity="0.54"/><circle cx="881.2" cy="7.1" r="0.8" fill-opacity="0.32"/><circle cx="988.8" cy="25.2" r="0.6" fill-opacity="0.45"/><circle cx="252.6" cy="7.5" r="0.5" fill-opacity="0.23"/><circle cx="703.0" cy="1.5" r="0.6" fill-opacity="0.20"/><circle cx="1139.6" cy="22.0" r="0.7" fill-opacity="0.29"/><circle cx="9.7" cy="2.5" r="0.6" fill-opacity="0.48"/><circle cx="436.4" cy="11.2" r="0.8" fill-opacity="0.24"/><circle cx="86.5" cy="9.6" r="0.7" fill-opacity="0.52"/><circle cx="495.3" cy="16.4" r="0.5" fill-opacity="0.57"/><circle cx="419.4" cy="25.3" r="0.6" fill-opacity="0.37"/><circle cx="142.4" cy="4.4" r="0.6" fill-opacity="0.58"/><circle cx="94.7" cy="23.3" r="0.6" fill-opacity="0.57"/><circle cx="469.4" cy="26.8" r="0.6" fill-opacity="0.35"/><circle cx="77.7" cy="15.1" r="0.6" fill-opacity="0.41"/><circle cx="797.4" cy="9.6" r="0.4" fill-opacity="0.45"/><circle cx="296.4" cy="14.8" r="0.5" fill-opacity="0.42"/><circle cx="1049.0" cy="14.0" r="0.6" fill-opacity="0.30"/><circle cx="993.6" cy="30.6" r="0.5" fill-opacity="0.40"/><circle cx="120.4" cy="32.3" r="0.5" fill-opacity="0.51"/><circle cx="19.6" cy="1.1" r="0.7" fill-opacity="0.60"/><circle cx="987.8" cy="31.4" r="0.5" fill-opacity="0.36"/><circle cx="438.1" cy="16.7" r="0.7" fill-opacity="0.37"/><circle cx="789.5" cy="2.2" r="0.6" fill-opacity="0.59"/><circle cx="1202.0" cy="14.2" r="0.6" fill-opacity="0.44"/><circle cx="849.0" cy="35.9" r="0.5" fill-opacity="0.60"/><circle cx="794.6" cy="28.4" r="0.6" fill-opacity="0.38"/><circle cx="707.6" cy="17.9" r="0.5" fill-opacity="0.38"/><circle cx="116.2" cy="28.6" r="0.4" fill-opacity="0.23"/><circle cx="785.9" cy="22.4" r="0.6" fill-opacity="0.45"/><circle cx="1174.5" cy="17.1" r="0.5" fill-opacity="0.34"/><circle cx="188.7" cy="13.4" r="0.7" fill-opacity="0.58"/><circle cx="1084.8" cy="0.9" r="0.7" fill-opacity="0.34"/><circle cx="679.5" cy="35.1" r="0.5" fill-opacity="0.29"/><circle cx="614.4" cy="4.5" r="0.6" fill-opacity="0.21"/><circle cx="107.0" cy="18.4" r="0.6" fill-opacity="0.31"/><circle cx="297.8" cy="21.3" r="0.9" fill-opacity="0.17"/><circle cx="263.6" cy="16.3" r="0.5" fill-opacity="0.36"/><circle cx="1030.2" cy="3.8" r="0.5" fill-opacity="0.21"/><circle cx="683.4" cy="6.3" r="0.5" fill-opacity="0.34"/><circle cx="13.0" cy="5.5" r="0.5" fill-opacity="0.48"/><circle cx="863.0" cy="5.6" r="0.4" fill-opacity="0.33"/><circle cx="597.6" cy="32.8" r="0.4" fill-opacity="0.33"/><circle cx="362.7" cy="7.7" r="0.5" fill-opacity="0.45"/><circle cx="507.7" cy="32.2" r="0.6" fill-opacity="0.44"/><circle cx="1073.8" cy="34.1" r="0.5" fill-opacity="0.33"/><circle cx="362.5" cy="26.6" r="0.6" fill-opacity="0.25"/><circle cx="102.3" cy="28.5" r="0.8" fill-opacity="0.31"/><circle cx="521.3" cy="16.2" r="0.4" fill-opacity="0.29"/><circle cx="643.1" cy="5.9" r="0.8" fill-opacity="0.40"/><circle cx="484.1" cy="8.0" r="0.5" fill-opacity="0.47"/><circle cx="39.2" cy="12.9" r="0.6" fill-opacity="0.38"/><circle cx="638.0" cy="26.4" r="0.7" fill-opacity="0.33"/><circle cx="1170.2" cy="0.3" r="0.7" fill-opacity="0.58"/><circle cx="442.8" cy="21.5" r="0.7" fill-opacity="0.53"/><circle cx="254.1" cy="27.5" r="0.4" fill-opacity="0.29"/><circle cx="602.6" cy="18.6" r="0.7" fill-opacity="0.17"/><circle cx="112.4" cy="9.1" r="0.6" fill-opacity="0.51"/><circle cx="1142.9" cy="23.3" r="0.7" fill-opacity="0.33"/><circle cx="346.1" cy="24.5" r="0.5" fill-opacity="0.33"/><circle cx="272.8" cy="9.0" r="0.4" fill-opacity="0.29"/><circle cx="992.2" cy="28.4" r="0.6" fill-opacity="0.18"/><circle cx="924.7" cy="1.7" r="0.5" fill-opacity="0.40"/><circle cx="1123.0" cy="23.0" r="0.4" fill-opacity="0.43"/><circle cx="826.9" cy="7.6" r="0.4" fill-opacity="0.52"/><circle cx="580.3" cy="12.1" r="0.5" fill-opacity="0.23"/><circle cx="101.1" cy="24.7" r="0.5" fill-opacity="0.32"/><circle cx="542.1" cy="15.7" r="0.5" fill-opacity="0.35"/><circle cx="1086.6" cy="26.2" r="0.5" fill-opacity="0.58"/><circle cx="431.0" cy="29.9" r="0.5" fill-opacity="0.47"/><circle cx="481.0" cy="24.9" r="0.5" fill-opacity="0.57"/><circle cx="255.7" cy="14.9" r="0.5" fill-opacity="0.53"/><circle cx="149.4" cy="31.5" r="0.9" fill-opacity="0.33"/><circle cx="1085.8" cy="33.5" r="0.6" fill-opacity="0.45"/><circle cx="1124.0" cy="17.8" r="0.8" fill-opacity="0.38"/><circle cx="583.4" cy="19.8" r="0.5" fill-opacity="0.50"/><circle cx="392.5" cy="0.5" r="0.5" fill-opacity="0.44"/><circle cx="456.6" cy="28.9" r="0.8" fill-opacity="0.35"/><circle cx="713.0" cy="16.6" r="0.5" fill-opacity="0.37"/><circle cx="1187.5" cy="11.8" r="0.9" fill-opacity="0.26"/><circle cx="316.4" cy="26.3" r="0.4" fill-opacity="0.27"/><circle cx="77.7" cy="29.7" r="0.8" fill-opacity="0.26"/><circle cx="258.4" cy="32.7" r="0.5" fill-opacity="0.40"/><circle cx="1181.6" cy="32.7" r="0.9" fill-opacity="0.32"/><circle cx="142.3" cy="6.7" r="0.5" fill-opacity="0.46"/><circle cx="606.3" cy="5.4" r="0.7" fill-opacity="0.41"/><circle cx="667.9" cy="12.0" r="0.5" fill-opacity="0.35"/><circle cx="1175.7" cy="12.8" r="0.6" fill-opacity="0.19"/><circle cx="949.5" cy="7.9" r="0.6" fill-opacity="0.54"/><circle cx="893.2" cy="12.4" r="0.5" fill-opacity="0.49"/><circle cx="705.3" cy="32.4" r="0.7" fill-opacity="0.46"/><circle cx="440.8" cy="34.2" r="0.6" fill-opacity="0.42"/><circle cx="1006.0" cy="35.4" r="0.5" fill-opacity="0.26"/><circle cx="24.6" cy="19.3" r="0.6" fill-opacity="0.45"/><circle cx="346.9" cy="20.2" r="0.6" fill-opacity="0.37"/><circle cx="330.1" cy="10.3" r="0.6" fill-opacity="0.57"/><circle cx="184.3" cy="14.0" r="0.5" fill-opacity="0.42"/><circle cx="658.5" cy="26.4" r="0.6" fill-opacity="0.29"/><circle cx="517.2" cy="28.1" r="0.6" fill-opacity="0.37"/><circle cx="831.0" cy="12.4" r="0.6" fill-opacity="0.57"/><circle cx="612.3" cy="20.4" r="0.7" fill-opacity="0.55"/><circle cx="91.3" cy="19.8" r="0.5" fill-opacity="0.29"/><circle cx="3.2" cy="33.6" r="0.5" fill-opacity="0.24"/><circle cx="444.9" cy="12.7" r="0.5" fill-opacity="0.18"/><circle cx="807.0" cy="2.4" r="0.4" fill-opacity="0.34"/><circle cx="173.1" cy="32.5" r="0.5" fill-opacity="0.35"/><circle cx="822.8" cy="3.1" r="0.7" fill-opacity="0.43"/><circle cx="1120.5" cy="31.7" r="0.5" fill-opacity="0.34"/><circle cx="588.4" cy="2.8" r="0.9" fill-opacity="0.16"/><circle cx="1138.3" cy="32.3" r="0.5" fill-opacity="0.21"/><circle cx="363.6" cy="12.1" r="0.6" fill-opacity="0.57"/><circle cx="1182.0" cy="34.2" r="0.5" fill-opacity="0.54"/><circle cx="1132.2" cy="0.7" r="0.9" fill-opacity="0.51"/><circle cx="1206.8" cy="20.6" r="0.7" fill-opacity="0.57"/><circle cx="104.6" cy="18.7" r="0.4" fill-opacity="0.20"/><circle cx="360.8" cy="10.8" r="0.4" fill-opacity="0.34"/><circle cx="180.6" cy="6.7" r="0.5" fill-opacity="0.15"/><circle cx="82.2" cy="28.6" r="0.8" fill-opacity="0.53"/><circle cx="493.6" cy="12.1" r="0.7" fill-opacity="0.33"/><circle cx="1088.1" cy="8.7" r="0.4" fill-opacity="0.41"/><circle cx="637.1" cy="12.1" r="0.7" fill-opacity="0.35"/><circle cx="283.8" cy="31.7" r="0.5" fill-opacity="0.24"/><circle cx="256.0" cy="16.2" r="0.6" fill-opacity="0.50"/><circle cx="403.1" cy="8.6" r="0.6" fill-opacity="0.42"/><circle cx="695.4" cy="20.6" r="0.4" fill-opacity="0.23"/><circle cx="281.2" cy="10.9" r="0.7" fill-opacity="0.48"/><circle cx="247.5" cy="1.2" r="0.6" fill-opacity="0.39"/><circle cx="95.2" cy="27.5" r="0.6" fill-opacity="0.35"/><circle cx="54.4" cy="20.1" r="0.5" fill-opacity="0.32"/><circle cx="431.7" cy="32.8" r="0.8" fill-opacity="0.60"/><circle cx="507.5" cy="24.1" r="0.6" fill-opacity="0.30"/><circle cx="957.2" cy="13.7" r="0.6" fill-opacity="0.40"/><circle cx="1143.1" cy="2.5" r="0.4" fill-opacity="0.17"/><circle cx="39.8" cy="34.4" r="0.8" fill-opacity="0.56"/><circle cx="173.7" cy="7.4" r="0.9" fill-opacity="0.58"/><circle cx="1128.0" cy="12.3" r="0.5" fill-opacity="0.21"/><circle cx="865.3" cy="34.0" r="0.6" fill-opacity="0.26"/><circle cx="849.7" cy="8.5" r="0.9" fill-opacity="0.32"/><circle cx="880.2" cy="33.3" r="0.5" fill-opacity="0.57"/><circle cx="86.8" cy="6.7" r="0.7" fill-opacity="0.45"/><circle cx="149.1" cy="11.6" r="0.5" fill-opacity="0.27"/><circle cx="632.1" cy="29.4" r="0.9" fill-opacity="0.49"/><circle cx="637.9" cy="34.1" r="0.5" fill-opacity="0.44"/><circle cx="20.0" cy="33.2" r="0.5" fill-opacity="0.22"/><circle cx="400.1" cy="20.5" r="0.6" fill-opacity="0.37"/><circle cx="1081.6" cy="21.5" r="0.7" fill-opacity="0.42"/><circle cx="1024.5" cy="16.7" r="0.6" fill-opacity="0.22"/><circle cx="568.1" cy="24.4" r="0.9" fill-opacity="0.49"/><circle cx="485.0" cy="1.9" r="0.5" fill-opacity="0.17"/><circle cx="485.8" cy="29.6" r="0.4" fill-opacity="0.16"/><circle cx="513.5" cy="34.6" r="0.5" fill-opacity="0.36"/><circle cx="221.1" cy="0.5" r="0.6" fill-opacity="0.59"/><circle cx="407.6" cy="30.5" r="0.7" fill-opacity="0.46"/><circle cx="303.7" cy="26.7" r="0.5" fill-opacity="0.31"/><circle cx="1070.4" cy="20.9" r="0.8" fill-opacity="0.34"/><circle cx="710.7" cy="9.2" r="0.9" fill-opacity="0.26"/><circle cx="1133.3" cy="30.7" r="0.5" fill-opacity="0.36"/><circle cx="679.9" cy="33.1" r="0.5" fill-opacity="0.57"/><circle cx="379.7" cy="20.0" r="0.8" fill-opacity="0.22"/><circle cx="1147.4" cy="10.2" r="0.5" fill-opacity="0.44"/><circle cx="3.9" cy="17.3" r="0.5" fill-opacity="0.37"/><circle cx="1117.2" cy="18.5" r="0.8" fill-opacity="0.46"/><circle cx="802.6" cy="14.4" r="0.9" fill-opacity="0.41"/><circle cx="765.2" cy="16.6" r="0.5" fill-opacity="0.29"/><circle cx="774.1" cy="2.2" r="0.5" fill-opacity="0.59"/><circle cx="339.2" cy="15.9" r="0.5" fill-opacity="0.28"/><circle cx="61.2" cy="21.0" r="0.8" fill-opacity="0.51"/><circle cx="308.4" cy="32.5" r="0.5" fill-opacity="0.34"/><circle cx="672.3" cy="34.1" r="0.9" fill-opacity="0.54"/><circle cx="183.4" cy="11.4" r="0.7" fill-opacity="0.57"/><circle cx="783.0" cy="24.8" r="0.9" fill-opacity="0.51"/><circle cx="1185.2" cy="33.0" r="0.6" fill-opacity="0.51"/><circle cx="861.8" cy="29.1" r="0.5" fill-opacity="0.20"/><circle cx="576.1" cy="25.7" r="0.4" fill-opacity="0.56"/><circle cx="27.7" cy="18.4" r="0.7" fill-opacity="0.36"/><circle cx="780.0" cy="24.3" r="0.8" fill-opacity="0.57"/><circle cx="780.2" cy="2.3" r="0.5" fill-opacity="0.20"/><circle cx="1189.4" cy="31.4" r="0.6" fill-opacity="0.26"/><circle cx="739.2" cy="27.9" r="0.6" fill-opacity="0.59"/><circle cx="754.3" cy="4.5" r="0.4" fill-opacity="0.35"/><circle cx="493.6" cy="14.2" r="0.4" fill-opacity="0.41"/><circle cx="1142.5" cy="23.0" r="0.9" fill-opacity="0.25"/><circle cx="861.1" cy="1.4" r="0.5" fill-opacity="0.37"/><circle cx="1185.8" cy="8.3" r="0.5" fill-opacity="0.46"/><circle cx="624.7" cy="11.4" r="0.6" fill-opacity="0.46"/><circle cx="32.6" cy="9.6" r="0.5" fill-opacity="0.30"/><circle cx="1122.7" cy="32.8" r="0.6" fill-opacity="0.39"/><circle cx="703.2" cy="10.9" r="0.9" fill-opacity="0.50"/><circle cx="403.6" cy="10.1" r="0.9" fill-opacity="0.18"/><circle cx="117.1" cy="25.4" r="0.4" fill-opacity="0.36"/><circle cx="901.7" cy="9.0" r="0.6" fill-opacity="0.57"/><circle cx="441.1" cy="15.6" r="0.8" fill-opacity="0.18"/><circle cx="63.2" cy="12.8" r="0.8" fill-opacity="0.25"/><circle cx="1114.3" cy="28.4" r="0.5" fill-opacity="0.20"/><circle cx="524.3" cy="24.7" r="0.6" fill-opacity="0.41"/><circle cx="508.2" cy="0.4" r="0.5" fill-opacity="0.24"/><circle cx="927.7" cy="2.1" r="0.5" fill-opacity="0.23"/><circle cx="1173.4" cy="28.3" r="0.7" fill-opacity="0.27"/><circle cx="965.5" cy="1.5" r="0.4" fill-opacity="0.36"/><circle cx="523.7" cy="3.8" r="0.9" fill-opacity="0.24"/><circle cx="305.9" cy="32.6" r="0.5" fill-opacity="0.15"/><circle cx="562.9" cy="22.1" r="0.5" fill-opacity="0.60"/><circle cx="603.3" cy="28.2" r="0.6" fill-opacity="0.33"/><circle cx="786.7" cy="24.5" r="0.8" fill-opacity="0.17"/><circle cx="860.4" cy="4.6" r="0.4" fill-opacity="0.41"/><circle cx="487.6" cy="13.8" r="0.8" fill-opacity="0.48"/><circle cx="749.7" cy="7.5" r="0.6" fill-opacity="0.53"/><circle cx="589.3" cy="21.2" r="0.7" fill-opacity="0.57"/><circle cx="772.7" cy="12.1" r="0.4" fill-opacity="0.25"/><circle cx="1048.3" cy="18.3" r="0.8" fill-opacity="0.48"/><circle cx="1053.3" cy="6.9" r="0.4" fill-opacity="0.51"/><circle cx="857.5" cy="16.1" r="0.7" fill-opacity="0.45"/><circle cx="247.9" cy="15.7" r="0.6" fill-opacity="0.43"/><circle cx="497.9" cy="10.9" r="0.5" fill-opacity="0.35"/><circle cx="573.5" cy="31.7" r="0.9" fill-opacity="0.45"/><circle cx="820.9" cy="18.2" r="0.8" fill-opacity="0.55"/><circle cx="90.8" cy="8.2" r="0.6" fill-opacity="0.48"/><circle cx="1150.2" cy="23.6" r="0.9" fill-opacity="0.35"/><circle cx="791.3" cy="8.1" r="0.5" fill-opacity="0.39"/><circle cx="1186.7" cy="12.3" r="0.8" fill-opacity="0.16"/><circle cx="503.9" cy="27.6" r="0.6" fill-opacity="0.19"/><circle cx="459.9" cy="31.1" r="0.6" fill-opacity="0.60"/><circle cx="238.1" cy="32.9" r="0.4" fill-opacity="0.37"/><circle cx="62.5" cy="7.8" r="0.8" fill-opacity="0.18"/><circle cx="1184.0" cy="25.6" r="0.7" fill-opacity="0.49"/><circle cx="701.1" cy="9.1" r="0.8" fill-opacity="0.39"/><circle cx="1195.3" cy="4.9" r="0.7" fill-opacity="0.51"/><circle cx="616.4" cy="0.8" r="0.7" fill-opacity="0.39"/><circle cx="599.7" cy="6.0" r="0.9" fill-opacity="0.45"/><circle cx="350.2" cy="29.0" r="0.8" fill-opacity="0.45"/><circle cx="118.8" cy="1.7" r="0.9" fill-opacity="0.39"/><circle cx="1200.3" cy="20.5" r="0.6" fill-opacity="0.31"/><circle cx="919.1" cy="2.7" r="0.6" fill-opacity="0.40"/><circle cx="203.7" cy="13.1" r="0.6" fill-opacity="0.32"/><circle cx="331.4" cy="12.9" r="0.4" fill-opacity="0.39"/><circle cx="481.8" cy="14.6" r="0.6" fill-opacity="0.43"/><circle cx="1010.5" cy="22.0" r="0.6" fill-opacity="0.23"/><circle cx="142.6" cy="3.1" r="0.4" fill-opacity="0.48"/><circle cx="320.2" cy="17.6" r="0.4" fill-opacity="0.45"/><circle cx="352.7" cy="11.9" r="0.7" fill-opacity="0.46"/><circle cx="408.2" cy="31.6" r="0.6" fill-opacity="0.53"/><circle cx="849.2" cy="1.0" r="0.6" fill-opacity="0.42"/><circle cx="1195.3" cy="8.0" r="0.6" fill-opacity="0.42"/><circle cx="386.9" cy="23.3" r="0.7" fill-opacity="0.50"/><circle cx="1073.8" cy="6.3" r="0.5" fill-opacity="0.56"/><circle cx="819.9" cy="6.2" r="0.7" fill-opacity="0.42"/><circle cx="421.6" cy="27.7" r="0.7" fill-opacity="0.54"/><circle cx="274.3" cy="13.1" r="0.6" fill-opacity="0.37"/><circle cx="809.9" cy="30.6" r="0.5" fill-opacity="0.49"/><circle cx="823.9" cy="33.9" r="0.4" fill-opacity="0.19"/><circle cx="53.6" cy="12.7" r="0.9" fill-opacity="0.42"/><circle cx="1044.2" cy="2.3" r="0.5" fill-opacity="0.34"/><circle cx="1100.7" cy="22.1" r="0.6" fill-opacity="0.17"/><circle cx="184.9" cy="24.4" r="0.4" fill-opacity="0.36"/><circle cx="350.0" cy="20.2" r="0.7" fill-opacity="0.26"/><circle cx="4.2" cy="33.3" r="0.6" fill-opacity="0.27"/><circle cx="19.7" cy="11.2" r="0.5" fill-opacity="0.27"/><circle cx="136.8" cy="30.5" r="0.9" fill-opacity="0.45"/><circle cx="230.0" cy="19.6" r="0.9" fill-opacity="0.46"/><circle cx="606.1" cy="14.9" r="0.8" fill-opacity="0.31"/><circle cx="321.6" cy="16.0" r="0.6" fill-opacity="0.28"/><circle cx="358.7" cy="14.1" r="0.4" fill-opacity="0.43"/><circle cx="345.8" cy="6.9" r="0.9" fill-opacity="0.46"/><circle cx="901.6" cy="16.4" r="0.8" fill-opacity="0.38"/><circle cx="274.4" cy="20.9" r="0.6" fill-opacity="0.18"/><circle cx="299.0" cy="35.0" r="0.8" fill-opacity="0.38"/><circle cx="375.2" cy="31.0" r="0.7" fill-opacity="0.60"/><circle cx="91.5" cy="35.8" r="0.4" fill-opacity="0.54"/><circle cx="967.1" cy="25.7" r="0.5" fill-opacity="0.35"/><circle cx="1198.5" cy="32.3" r="0.4" fill-opacity="0.41"/><circle cx="209.8" cy="16.7" r="0.6" fill-opacity="0.45"/><circle cx="262.5" cy="16.1" r="0.7" fill-opacity="0.60"/><circle cx="1116.2" cy="22.1" r="0.4" fill-opacity="0.25"/><circle cx="795.3" cy="7.7" r="0.5" fill-opacity="0.26"/><circle cx="376.8" cy="6.4" r="0.5" fill-opacity="0.59"/><circle cx="222.8" cy="6.8" r="0.6" fill-opacity="0.49"/><circle cx="69.3" cy="1.2" r="0.5" fill-opacity="0.51"/><circle cx="768.2" cy="26.6" r="0.9" fill-opacity="0.44"/><circle cx="1192.2" cy="29.0" r="0.5" fill-opacity="0.29"/><circle cx="139.5" cy="0.2" r="0.4" fill-opacity="0.54"/><circle cx="368.2" cy="31.6" r="0.6" fill-opacity="0.32"/><circle cx="784.6" cy="15.0" r="0.4" fill-opacity="0.26"/><circle cx="337.7" cy="33.0" r="0.5" fill-opacity="0.18"/><circle cx="225.8" cy="8.5" r="0.6" fill-opacity="0.57"/><circle cx="805.8" cy="4.3" r="0.8" fill-opacity="0.57"/><circle cx="387.5" cy="0.3" r="0.8" fill-opacity="0.37"/><circle cx="465.1" cy="19.1" r="0.4" fill-opacity="0.20"/><circle cx="435.7" cy="21.9" r="0.7" fill-opacity="0.33"/><circle cx="1141.9" cy="23.2" r="0.5" fill-opacity="0.24"/><circle cx="13.8" cy="23.7" r="0.6" fill-opacity="0.35"/><circle cx="586.7" cy="1.5" r="0.4" fill-opacity="0.21"/><circle cx="464.5" cy="8.1" r="0.8" fill-opacity="0.43"/><circle cx="903.2" cy="27.4" r="0.4" fill-opacity="0.31"/><circle cx="81.3" cy="10.0" r="0.4" fill-opacity="0.55"/><circle cx="292.5" cy="23.3" r="0.5" fill-opacity="0.19"/><circle cx="56.5" cy="30.5" r="0.4" fill-opacity="0.42"/><circle cx="278.5" cy="6.5" r="0.9" fill-opacity="0.20"/><circle cx="242.9" cy="23.1" r="0.5" fill-opacity="0.18"/><circle cx="1000.9" cy="28.5" r="0.8" fill-opacity="0.22"/><circle cx="688.0" cy="18.3" r="0.8" fill-opacity="0.15"/><circle cx="372.3" cy="35.6" r="0.4" fill-opacity="0.24"/><circle cx="406.6" cy="0.3" r="0.8" fill-opacity="0.28"/><circle cx="346.3" cy="23.9" r="0.5" fill-opacity="0.32"/><circle cx="857.5" cy="13.4" r="0.5" fill-opacity="0.56"/><circle cx="49.5" cy="10.2" r="0.6" fill-opacity="0.26"/><circle cx="1207.2" cy="3.6" r="0.5" fill-opacity="0.43"/><circle cx="1047.7" cy="12.3" r="0.6" fill-opacity="0.20"/><circle cx="1186.5" cy="26.7" r="0.7" fill-opacity="0.42"/><circle cx="819.4" cy="20.8" r="0.6" fill-opacity="0.60"/><circle cx="1016.3" cy="23.6" r="0.5" fill-opacity="0.27"/><circle cx="601.5" cy="3.2" r="0.4" fill-opacity="0.35"/><circle cx="700.9" cy="7.5" r="0.8" fill-opacity="0.24"/><circle cx="541.9" cy="30.9" r="0.4" fill-opacity="0.27"/><circle cx="442.7" cy="25.0" r="0.6" fill-opacity="0.39"/><circle cx="318.3" cy="13.7" r="0.7" fill-opacity="0.48"/><circle cx="139.4" cy="24.8" r="0.7" fill-opacity="0.44"/><circle cx="568.1" cy="18.3" r="0.4" fill-opacity="0.18"/><circle cx="867.1" cy="8.4" r="0.9" fill-opacity="0.23"/><circle cx="560.6" cy="17.1" r="0.8" fill-opacity="0.27"/><circle cx="680.4" cy="8.7" r="0.9" fill-opacity="0.39"/><circle cx="749.3" cy="32.9" r="0.6" fill-opacity="0.21"/><circle cx="725.4" cy="24.7" r="0.8" fill-opacity="0.34"/><circle cx="221.9" cy="26.3" r="0.7" fill-opacity="0.59"/><circle cx="70.6" cy="3.5" r="0.4" fill-opacity="0.21"/><circle cx="819.1" cy="9.2" r="0.6" fill-opacity="0.40"/><circle cx="1036.8" cy="13.4" r="0.5" fill-opacity="0.18"/><circle cx="784.9" cy="17.1" r="0.5" fill-opacity="0.16"/><circle cx="195.7" cy="2.3" r="0.7" fill-opacity="0.21"/><circle cx="730.7" cy="29.7" r="0.7" fill-opacity="0.56"/><circle cx="451.5" cy="23.4" r="0.7" fill-opacity="0.55"/><circle cx="671.0" cy="21.0" r="0.4" fill-opacity="0.45"/><circle cx="1180.6" cy="10.3" r="0.6" fill-opacity="0.43"/><circle cx="567.2" cy="0.4" r="0.9" fill-opacity="0.53"/><circle cx="583.8" cy="32.8" r="0.5" fill-opacity="0.38"/><circle cx="71.2" cy="4.7" r="0.7" fill-opacity="0.46"/><circle cx="1199.5" cy="28.5" r="0.6" fill-opacity="0.18"/><circle cx="736.9" cy="15.1" r="0.6" fill-opacity="0.33"/><circle cx="1114.8" cy="17.4" r="0.8" fill-opacity="0.46"/><circle cx="1035.1" cy="2.9" r="0.5" fill-opacity="0.17"/><circle cx="484.0" cy="2.9" r="0.5" fill-opacity="0.35"/><circle cx="688.9" cy="3.5" r="0.6" fill-opacity="0.49"/><circle cx="538.3" cy="10.6" r="0.7" fill-opacity="0.32"/><circle cx="1104.2" cy="26.2" r="0.4" fill-opacity="0.55"/><circle cx="584.8" cy="4.8" r="0.5" fill-opacity="0.20"/><circle cx="1062.1" cy="26.4" r="0.5" fill-opacity="0.25"/><circle cx="540.0" cy="21.8" r="0.4" fill-opacity="0.28"/><circle cx="58.9" cy="25.4" r="0.8" fill-opacity="0.50"/><circle cx="132.2" cy="1.3" r="0.7" fill-opacity="0.36"/><circle cx="1090.6" cy="28.5" r="0.6" fill-opacity="0.52"/><circle cx="1103.5" cy="6.4" r="0.9" fill-opacity="0.29"/><circle cx="1110.3" cy="7.5" r="0.5" fill-opacity="0.34"/><circle cx="190.4" cy="16.5" r="0.5" fill-opacity="0.29"/><circle cx="876.7" cy="32.5" r="0.4" fill-opacity="0.52"/><circle cx="288.9" cy="30.4" r="0.6" fill-opacity="0.26"/><circle cx="668.4" cy="11.4" r="0.5" fill-opacity="0.42"/><circle cx="317.9" cy="8.7" r="0.8" fill-opacity="0.54"/><circle cx="1134.6" cy="8.1" r="0.5" fill-opacity="0.20"/><circle cx="115.8" cy="6.1" r="0.8" fill-opacity="0.37"/><circle cx="780.5" cy="13.1" r="0.7" fill-opacity="0.18"/><circle cx="272.9" cy="21.8" r="0.6" fill-opacity="0.21"/><circle cx="850.9" cy="21.5" r="0.8" fill-opacity="0.33"/><circle cx="785.2" cy="13.5" r="0.8" fill-opacity="0.50"/><circle cx="149.3" cy="9.0" r="0.9" fill-opacity="0.31"/><circle cx="1025.5" cy="28.8" r="0.5" fill-opacity="0.53"/><circle cx="467.5" cy="23.1" r="0.6" fill-opacity="0.32"/><circle cx="688.8" cy="34.9" r="0.5" fill-opacity="0.56"/><circle cx="366.6" cy="13.6" r="0.5" fill-opacity="0.46"/><circle cx="1187.2" cy="19.1" r="0.5" fill-opacity="0.39"/><circle cx="941.5" cy="17.6" r="0.5" fill-opacity="0.54"/><circle cx="427.2" cy="17.0" r="0.6" fill-opacity="0.51"/><circle cx="1129.4" cy="29.0" r="0.6" fill-opacity="0.48"/><circle cx="36.6" cy="23.0" r="0.7" fill-opacity="0.37"/><circle cx="14.4" cy="15.1" r="0.5" fill-opacity="0.51"/><circle cx="730.3" cy="0.5" r="0.9" fill-opacity="0.36"/><circle cx="590.8" cy="11.5" r="0.8" fill-opacity="0.35"/><circle cx="312.2" cy="4.8" r="0.5" fill-opacity="0.21"/><circle cx="978.3" cy="3.2" r="0.5" fill-opacity="0.38"/><circle cx="216.4" cy="22.2" r="0.6" fill-opacity="0.60"/><circle cx="699.9" cy="32.3" r="0.5" fill-opacity="0.49"/><circle cx="782.0" cy="17.0" r="0.7" fill-opacity="0.45"/><circle cx="191.3" cy="19.1" r="0.8" fill-opacity="0.51"/><circle cx="902.1" cy="32.2" r="0.9" fill-opacity="0.19"/><circle cx="175.7" cy="1.7" r="0.5" fill-opacity="0.58"/><circle cx="942.3" cy="4.1" r="0.5" fill-opacity="0.36"/><circle cx="683.5" cy="10.1" r="0.7" fill-opacity="0.20"/><circle cx="404.9" cy="15.1" r="0.9" fill-opacity="0.40"/><circle cx="112.7" cy="31.8" r="0.5" fill-opacity="0.31"/><circle cx="784.8" cy="24.0" r="0.5" fill-opacity="0.34"/><circle cx="630.4" cy="7.3" r="0.9" fill-opacity="0.17"/><circle cx="72.0" cy="16.8" r="0.5" fill-opacity="0.42"/><circle cx="686.6" cy="19.4" r="0.9" fill-opacity="0.15"/><circle cx="1195.4" cy="30.1" r="0.8" fill-opacity="0.43"/><circle cx="576.5" cy="23.8" r="0.9" fill-opacity="0.23"/><circle cx="915.5" cy="29.4" r="0.6" fill-opacity="0.44"/><circle cx="442.6" cy="15.4" r="0.5" fill-opacity="0.56"/><circle cx="573.7" cy="4.6" r="0.7" fill-opacity="0.19"/><circle cx="344.8" cy="30.5" r="0.7" fill-opacity="0.35"/><circle cx="553.3" cy="16.8" r="0.7" fill-opacity="0.51"/><circle cx="612.4" cy="34.2" r="0.7" fill-opacity="0.59"/><circle cx="844.9" cy="5.5" r="0.8" fill-opacity="0.40"/><circle cx="1124.5" cy="19.8" r="0.8" fill-opacity="0.45"/><circle cx="271.8" cy="12.6" r="0.5" fill-opacity="0.29"/><circle cx="446.5" cy="11.2" r="0.5" fill-opacity="0.18"/><circle cx="831.4" cy="22.3" r="0.7" fill-opacity="0.23"/><circle cx="127.5" cy="0.5" r="0.6" fill-opacity="0.23"/><circle cx="990.2" cy="33.9" r="0.6" fill-opacity="0.24"/><circle cx="381.9" cy="27.7" r="0.6" fill-opacity="0.17"/><circle cx="592.2" cy="3.2" r="0.5" fill-opacity="0.51"/><circle cx="316.9" cy="29.2" r="0.6" fill-opacity="0.42"/><circle cx="1161.6" cy="33.8" r="0.5" fill-opacity="0.53"/><circle cx="398.5" cy="33.5" r="0.6" fill-opacity="0.20"/><circle cx="366.6" cy="15.9" r="0.7" fill-opacity="0.24"/><circle cx="1087.3" cy="31.2" r="0.4" fill-opacity="0.17"/><circle cx="345.9" cy="10.5" r="0.8" fill-opacity="0.33"/><circle cx="93.3" cy="30.8" r="0.8" fill-opacity="0.18"/><circle cx="297.3" cy="26.3" r="0.7" fill-opacity="0.35"/><circle cx="605.4" cy="27.9" r="0.6" fill-opacity="0.34"/><circle cx="661.6" cy="14.4" r="0.6" fill-opacity="0.32"/><circle cx="552.3" cy="1.6" r="0.9" fill-opacity="0.51"/><circle cx="112.3" cy="22.4" r="0.4" fill-opacity="0.28"/><circle cx="360.9" cy="4.1" r="0.4" fill-opacity="0.51"/><circle cx="720.6" cy="26.4" r="0.4" fill-opacity="0.31"/><circle cx="537.4" cy="18.9" r="0.4" fill-opacity="0.34"/><circle cx="486.6" cy="30.0" r="0.9" fill-opacity="0.19"/><circle cx="467.7" cy="9.7" r="0.8" fill-opacity="0.51"/><circle cx="1012.0" cy="32.2" r="0.5" fill-opacity="0.45"/><circle cx="559.0" cy="19.2" r="0.4" fill-opacity="0.52"/><circle cx="1000.7" cy="19.3" r="0.4" fill-opacity="0.42"/><circle cx="160.7" cy="0.3" r="0.5" fill-opacity="0.55"/><circle cx="326.9" cy="32.3" r="0.9" fill-opacity="0.20"/><circle cx="767.6" cy="29.5" r="0.8" fill-opacity="0.15"/><circle cx="272.0" cy="26.4" r="0.6" fill-opacity="0.58"/><circle cx="495.8" cy="16.6" r="0.4" fill-opacity="0.41"/><circle cx="848.5" cy="2.8" r="0.9" fill-opacity="0.37"/><circle cx="409.5" cy="3.8" r="0.8" fill-opacity="0.57"/><circle cx="150.3" cy="16.0" r="0.6" fill-opacity="0.40"/><circle cx="607.1" cy="6.6" r="0.8" fill-opacity="0.33"/><circle cx="572.5" cy="15.7" r="0.6" fill-opacity="0.57"/><circle cx="1128.0" cy="32.7" r="0.6" fill-opacity="0.47"/><circle cx="239.8" cy="32.9" r="0.9" fill-opacity="0.42"/><circle cx="423.3" cy="35.7" r="0.6" fill-opacity="0.44"/><circle cx="156.8" cy="33.6" r="0.4" fill-opacity="0.45"/><circle cx="120.7" cy="4.3" r="0.5" fill-opacity="0.55"/><circle cx="318.9" cy="3.7" r="0.6" fill-opacity="0.59"/><circle cx="867.8" cy="17.0" r="0.7" fill-opacity="0.50"/><circle cx="616.8" cy="9.8" r="0.7" fill-opacity="0.48"/><circle cx="165.0" cy="9.3" r="0.6" fill-opacity="0.23"/><circle cx="901.1" cy="4.2" r="0.4" fill-opacity="0.57"/><circle cx="1018.6" cy="30.5" r="0.7" fill-opacity="0.41"/><circle cx="89.9" cy="26.3" r="0.4" fill-opacity="0.17"/><circle cx="74.2" cy="26.3" r="0.9" fill-opacity="0.17"/><circle cx="708.4" cy="24.7" r="0.6" fill-opacity="0.45"/><circle cx="840.0" cy="13.2" r="0.5" fill-opacity="0.49"/><circle cx="458.7" cy="25.8" r="0.8" fill-opacity="0.36"/><circle cx="248.4" cy="16.2" r="0.5" fill-opacity="0.22"/><circle cx="1195.3" cy="33.1" r="0.6" fill-opacity="0.21"/><circle cx="1172.6" cy="29.5" r="0.5" fill-opacity="0.45"/><circle cx="25.1" cy="31.2" r="0.5" fill-opacity="0.48"/><circle cx="743.1" cy="12.8" r="0.7" fill-opacity="0.44"/><circle cx="422.4" cy="35.6" r="0.4" fill-opacity="0.45"/><circle cx="734.1" cy="29.1" r="0.9" fill-opacity="0.36"/><circle cx="17.7" cy="22.1" r="0.5" fill-opacity="0.54"/><circle cx="741.3" cy="13.1" r="0.4" fill-opacity="0.44"/><circle cx="392.0" cy="17.7" r="0.9" fill-opacity="0.42"/><circle cx="1032.6" cy="27.8" r="0.6" fill-opacity="0.36"/><circle cx="1086.5" cy="14.3" r="0.4" fill-opacity="0.40"/><circle cx="1111.1" cy="2.2" r="0.8" fill-opacity="0.29"/><circle cx="78.2" cy="31.5" r="0.6" fill-opacity="0.48"/><circle cx="901.1" cy="3.3" r="0.8" fill-opacity="0.31"/><circle cx="55.4" cy="22.4" r="0.6" fill-opacity="0.41"/><circle cx="364.4" cy="11.7" r="0.6" fill-opacity="0.34"/><circle cx="833.3" cy="12.2" r="0.6" fill-opacity="0.46"/><circle cx="433.3" cy="14.7" r="0.6" fill-opacity="0.58"/><circle cx="939.7" cy="28.9" r="0.5" fill-opacity="0.54"/><circle cx="897.4" cy="2.0" r="0.5" fill-opacity="0.26"/><circle cx="117.1" cy="29.9" r="0.5" fill-opacity="0.52"/><circle cx="131.4" cy="15.8" r="0.9" fill-opacity="0.21"/><circle cx="1172.8" cy="18.4" r="0.6" fill-opacity="0.18"/><circle cx="533.2" cy="29.6" r="0.4" fill-opacity="0.27"/><circle cx="264.2" cy="10.9" r="0.8" fill-opacity="0.29"/><circle cx="804.9" cy="32.6" r="0.6" fill-opacity="0.55"/><circle cx="1115.9" cy="9.1" r="0.7" fill-opacity="0.19"/><circle cx="704.5" cy="2.7" r="0.5" fill-opacity="0.38"/><circle cx="833.8" cy="8.1" r="0.4" fill-opacity="0.52"/><circle cx="159.0" cy="30.4" r="0.9" fill-opacity="0.54"/><circle cx="599.9" cy="16.2" r="0.6" fill-opacity="0.17"/><circle cx="637.1" cy="33.3" r="0.5" fill-opacity="0.30"/><circle cx="213.5" cy="14.9" r="0.5" fill-opacity="0.34"/><circle cx="636.8" cy="9.9" r="0.6" fill-opacity="0.46"/><circle cx="355.2" cy="3.1" r="0.8" fill-opacity="0.32"/><circle cx="230.5" cy="0.1" r="0.5" fill-opacity="0.49"/><circle cx="1189.0" cy="21.2" r="0.4" fill-opacity="0.36"/><circle cx="1097.5" cy="25.4" r="0.7" fill-opacity="0.43"/><circle cx="1157.2" cy="10.7" r="0.6" fill-opacity="0.19"/><circle cx="21.9" cy="30.5" r="0.5" fill-opacity="0.37"/><circle cx="508.5" cy="13.2" r="0.7" fill-opacity="0.29"/><circle cx="228.3" cy="15.5" r="0.9" fill-opacity="0.16"/><circle cx="737.9" cy="31.5" r="0.4" fill-opacity="0.26"/><circle cx="152.3" cy="11.6" r="0.6" fill-opacity="0.26"/><circle cx="189.0" cy="34.8" r="0.5" fill-opacity="0.57"/><circle cx="655.2" cy="1.8" r="0.7" fill-opacity="0.53"/><circle cx="261.7" cy="6.1" r="0.4" fill-opacity="0.15"/><circle cx="1110.8" cy="31.2" r="0.7" fill-opacity="0.17"/><circle cx="1148.1" cy="8.6" r="0.6" fill-opacity="0.19"/><circle cx="647.1" cy="2.0" r="0.9" fill-opacity="0.19"/><circle cx="895.5" cy="15.8" r="0.5" fill-opacity="0.26"/><circle cx="476.2" cy="28.5" r="0.4" fill-opacity="0.40"/><circle cx="454.9" cy="8.7" r="0.9" fill-opacity="0.58"/><circle cx="841.0" cy="8.0" r="0.6" fill-opacity="0.21"/><circle cx="1029.5" cy="8.0" r="0.5" fill-opacity="0.38"/><circle cx="416.5" cy="31.0" r="0.5" fill-opacity="0.17"/><circle cx="764.3" cy="16.7" r="0.8" fill-opacity="0.59"/><circle cx="286.1" cy="2.3" r="0.9" fill-opacity="0.57"/><circle cx="252.6" cy="0.2" r="0.5" fill-opacity="0.36"/><circle cx="419.5" cy="30.5" r="0.9" fill-opacity="0.34"/><circle cx="1158.8" cy="0.5" r="0.6" fill-opacity="0.21"/><circle cx="719.1" cy="23.2" r="0.5" fill-opacity="0.41"/><circle cx="546.7" cy="14.4" r="0.4" fill-opacity="0.43"/><circle cx="193.3" cy="32.0" r="0.9" fill-opacity="0.55"/><circle cx="226.6" cy="17.7" r="0.6" fill-opacity="0.29"/><circle cx="244.0" cy="16.0" r="0.9" fill-opacity="0.36"/><circle cx="1194.5" cy="10.4" r="0.8" fill-opacity="0.50"/><circle cx="1169.9" cy="10.5" r="0.6" fill-opacity="0.55"/><circle cx="1118.6" cy="9.8" r="0.5" fill-opacity="0.59"/><circle cx="1075.7" cy="20.5" r="0.5" fill-opacity="0.40"/><circle cx="647.9" cy="13.2" r="0.5" fill-opacity="0.49"/><circle cx="581.2" cy="7.5" r="0.5" fill-opacity="0.53"/><circle cx="553.9" cy="15.9" r="0.4" fill-opacity="0.58"/><circle cx="148.1" cy="22.4" r="0.5" fill-opacity="0.46"/><circle cx="872.8" cy="4.9" r="0.5" fill-opacity="0.44"/><circle cx="131.4" cy="3.8" r="0.5" fill-opacity="0.42"/><circle cx="1049.8" cy="19.9" r="0.5" fill-opacity="0.52"/><circle cx="1109.7" cy="22.1" r="0.4" fill-opacity="0.16"/><circle cx="420.4" cy="3.5" r="0.5" fill-opacity="0.42"/><circle cx="314.2" cy="1.7" r="0.7" fill-opacity="0.33"/><circle cx="1127.1" cy="7.4" r="0.6" fill-opacity="0.25"/><circle cx="499.0" cy="3.3" r="0.8" fill-opacity="0.22"/><circle cx="18.6" cy="20.7" r="0.6" fill-opacity="0.23"/><circle cx="242.4" cy="35.2" r="0.6" fill-opacity="0.48"/><circle cx="680.2" cy="9.5" r="0.6" fill-opacity="0.27"/><circle cx="1052.9" cy="24.4" r="0.7" fill-opacity="0.23"/><circle cx="674.1" cy="0.9" r="0.4" fill-opacity="0.29"/><circle cx="137.3" cy="1.4" r="0.6" fill-opacity="0.26"/><circle cx="121.2" cy="28.0" r="0.5" fill-opacity="0.55"/><circle cx="566.2" cy="6.8" r="0.4" fill-opacity="0.52"/><circle cx="1010.7" cy="35.3" r="0.6" fill-opacity="0.43"/><circle cx="705.0" cy="11.7" r="0.8" fill-opacity="0.42"/><circle cx="343.8" cy="35.6" r="0.8" fill-opacity="0.54"/><circle cx="872.4" cy="8.1" r="0.4" fill-opacity="0.26"/><circle cx="142.1" cy="4.9" r="0.6" fill-opacity="0.38"/><circle cx="733.6" cy="19.9" r="0.5" fill-opacity="0.40"/><circle cx="669.3" cy="8.5" r="0.5" fill-opacity="0.41"/><circle cx="378.1" cy="3.8" r="0.6" fill-opacity="0.16"/><circle cx="480.1" cy="33.4" r="0.9" fill-opacity="0.23"/><circle cx="955.7" cy="3.1" r="0.6" fill-opacity="0.46"/><circle cx="1000.4" cy="0.3" r="0.5" fill-opacity="0.23"/><circle cx="867.6" cy="21.1" r="0.9" fill-opacity="0.36"/><circle cx="170.5" cy="18.2" r="0.6" fill-opacity="0.27"/><circle cx="121.5" cy="33.6" r="0.6" fill-opacity="0.43"/><circle cx="664.7" cy="27.7" r="0.6" fill-opacity="0.29"/><circle cx="923.8" cy="17.7" r="0.5" fill-opacity="0.31"/><circle cx="177.2" cy="18.1" r="0.7" fill-opacity="0.43"/><circle cx="465.8" cy="3.1" r="0.4" fill-opacity="0.29"/><circle cx="911.5" cy="30.7" r="0.6" fill-opacity="0.50"/><circle cx="528.2" cy="26.7" r="0.7" fill-opacity="0.45"/><circle cx="678.2" cy="3.3" r="0.4" fill-opacity="0.34"/><circle cx="1174.6" cy="17.3" r="0.5" fill-opacity="0.33"/><circle cx="751.0" cy="10.7" r="0.4" fill-opacity="0.55"/><circle cx="214.6" cy="25.6" r="0.5" fill-opacity="0.40"/><circle cx="268.7" cy="10.5" r="0.9" fill-opacity="0.15"/><circle cx="1183.7" cy="32.7" r="0.9" fill-opacity="0.18"/><circle cx="951.0" cy="35.0" r="0.7" fill-opacity="0.32"/><circle cx="346.3" cy="28.3" r="0.9" fill-opacity="0.52"/><circle cx="4.3" cy="20.3" r="0.8" fill-opacity="0.30"/><circle cx="1156.1" cy="21.6" r="0.6" fill-opacity="0.30"/><circle cx="623.4" cy="21.2" r="0.6" fill-opacity="0.37"/><circle cx="348.8" cy="5.7" r="0.6" fill-opacity="0.24"/><circle cx="279.5" cy="12.6" r="0.6" fill-opacity="0.36"/><circle cx="772.7" cy="22.9" r="0.5" fill-opacity="0.26"/><circle cx="1183.0" cy="19.7" r="0.7" fill-opacity="0.31"/><circle cx="526.1" cy="35.5" r="0.9" fill-opacity="0.46"/><circle cx="310.0" cy="31.0" r="0.6" fill-opacity="0.32"/><circle cx="1209.2" cy="14.2" r="0.8" fill-opacity="0.41"/><circle cx="633.2" cy="19.7" r="0.6" fill-opacity="0.58"/><circle cx="899.6" cy="3.3" r="0.5" fill-opacity="0.16"/><circle cx="63.9" cy="29.5" r="0.6" fill-opacity="0.59"/><circle cx="955.4" cy="33.4" r="0.5" fill-opacity="0.53"/><circle cx="24.0" cy="6.0" r="0.4" fill-opacity="0.46"/><circle cx="473.8" cy="17.1" r="0.6" fill-opacity="0.42"/><circle cx="1102.5" cy="24.2" r="0.6" fill-opacity="0.36"/><circle cx="437.7" cy="26.0" r="0.8" fill-opacity="0.57"/><circle cx="584.8" cy="7.2" r="0.9" fill-opacity="0.49"/><circle cx="588.8" cy="8.4" r="0.4" fill-opacity="0.19"/><circle cx="292.3" cy="6.7" r="0.8" fill-opacity="0.46"/><circle cx="275.3" cy="24.8" r="0.6" fill-opacity="0.49"/><circle cx="1205.7" cy="12.0" r="0.9" fill-opacity="0.35"/><circle cx="617.2" cy="6.4" r="0.5" fill-opacity="0.48"/><circle cx="1200.2" cy="30.8" r="0.5" fill-opacity="0.19"/><circle cx="657.0" cy="7.1" r="0.6" fill-opacity="0.51"/><circle cx="713.2" cy="11.8" r="0.9" fill-opacity="0.46"/><circle cx="1204.7" cy="22.4" r="0.9" fill-opacity="0.47"/><circle cx="240.5" cy="27.0" r="0.8" fill-opacity="0.50"/><circle cx="300.6" cy="28.1" r="0.5" fill-opacity="0.54"/><circle cx="99.8" cy="8.0" r="0.6" fill-opacity="0.28"/><circle cx="1142.5" cy="15.6" r="0.9" fill-opacity="0.27"/><circle cx="12.0" cy="35.4" r="0.6" fill-opacity="0.21"/><circle cx="797.5" cy="33.2" r="0.8" fill-opacity="0.29"/><circle cx="635.9" cy="12.8" r="0.8" fill-opacity="0.25"/><circle cx="428.8" cy="28.5" r="0.6" fill-opacity="0.38"/><circle cx="178.1" cy="26.4" r="0.6" fill-opacity="0.55"/><circle cx="21.3" cy="11.5" r="0.8" fill-opacity="0.47"/><circle cx="655.6" cy="18.7" r="0.7" fill-opacity="0.40"/><circle cx="127.2" cy="17.7" r="0.6" fill-opacity="0.49"/><circle cx="519.6" cy="21.4" r="0.5" fill-opacity="0.48"/><circle cx="188.9" cy="22.7" r="0.5" fill-opacity="0.33"/><circle cx="1024.1" cy="27.0" r="0.5" fill-opacity="0.56"/><circle cx="1168.1" cy="13.2" r="0.4" fill-opacity="0.49"/><circle cx="600.4" cy="6.1" r="0.9" fill-opacity="0.18"/><circle cx="282.3" cy="28.0" r="0.6" fill-opacity="0.36"/><circle cx="21.1" cy="20.5" r="0.5" fill-opacity="0.39"/><circle cx="223.9" cy="2.4" r="0.6" fill-opacity="0.28"/><circle cx="954.7" cy="17.8" r="0.8" fill-opacity="0.44"/><circle cx="683.0" cy="23.2" r="0.8" fill-opacity="0.36"/><circle cx="1004.7" cy="13.2" r="0.6" fill-opacity="0.59"/><circle cx="1002.5" cy="27.8" r="0.6" fill-opacity="0.41"/><circle cx="84.0" cy="10.4" r="0.5" fill-opacity="0.40"/><circle cx="735.3" cy="15.5" r="0.6" fill-opacity="0.23"/><circle cx="1092.4" cy="0.2" r="0.5" fill-opacity="0.29"/><circle cx="379.9" cy="16.1" r="0.8" fill-opacity="0.41"/><circle cx="1089.1" cy="0.8" r="0.8" fill-opacity="0.35"/><circle cx="540.9" cy="23.5" r="0.7" fill-opacity="0.24"/><circle cx="324.9" cy="8.4" r="0.8" fill-opacity="0.31"/><circle cx="12.8" cy="10.0" r="0.9" fill-opacity="0.39"/><circle cx="951.8" cy="2.7" r="0.5" fill-opacity="0.51"/><circle cx="338.5" cy="0.7" r="0.5" fill-opacity="0.18"/><circle cx="361.2" cy="33.8" r="0.5" fill-opacity="0.56"/><circle cx="1094.1" cy="27.2" r="0.6" fill-opacity="0.37"/><circle cx="989.6" cy="10.4" r="0.5" fill-opacity="0.35"/><circle cx="928.8" cy="35.4" r="0.8" fill-opacity="0.37"/><circle cx="459.6" cy="2.5" r="0.5" fill-opacity="0.38"/><circle cx="907.1" cy="2.3" r="0.7" fill-opacity="0.46"/><circle cx="56.4" cy="34.0" r="0.9" fill-opacity="0.25"/><circle cx="1052.3" cy="18.6" r="0.5" fill-opacity="0.53"/><circle cx="667.6" cy="9.2" r="0.9" fill-opacity="0.26"/><circle cx="52.1" cy="19.9" r="0.8" fill-opacity="0.22"/><circle cx="306.5" cy="4.3" r="0.4" fill-opacity="0.44"/><circle cx="550.4" cy="25.3" r="0.5" fill-opacity="0.42"/><circle cx="797.4" cy="10.3" r="0.7" fill-opacity="0.48"/><circle cx="858.4" cy="7.0" r="0.8" fill-opacity="0.46"/><circle cx="216.1" cy="26.3" r="0.5" fill-opacity="0.29"/><circle cx="446.3" cy="8.9" r="0.6" fill-opacity="0.31"/><circle cx="194.5" cy="14.4" r="0.5" fill-opacity="0.28"/><circle cx="950.9" cy="9.5" r="0.5" fill-opacity="0.34"/><circle cx="1180.2" cy="31.7" r="0.9" fill-opacity="0.53"/><circle cx="1106.3" cy="33.5" r="0.8" fill-opacity="0.23"/><circle cx="555.4" cy="1.0" r="0.7" fill-opacity="0.33"/><circle cx="435.3" cy="34.9" r="0.9" fill-opacity="0.18"/><circle cx="512.0" cy="17.5" r="0.4" fill-opacity="0.43"/><circle cx="178.8" cy="24.0" r="0.6" fill-opacity="0.46"/><circle cx="188.2" cy="20.8" r="0.9" fill-opacity="0.26"/><circle cx="639.1" cy="30.7" r="0.7" fill-opacity="0.31"/><circle cx="294.0" cy="19.3" r="0.5" fill-opacity="0.52"/><circle cx="766.5" cy="28.1" r="0.5" fill-opacity="0.43"/><circle cx="759.7" cy="13.6" r="0.6" fill-opacity="0.23"/><circle cx="347.4" cy="4.1" r="0.4" fill-opacity="0.46"/><circle cx="914.3" cy="33.1" r="0.5" fill-opacity="0.56"/><circle cx="587.1" cy="19.2" r="0.9" fill-opacity="0.22"/><circle cx="528.6" cy="18.5" r="0.6" fill-opacity="0.32"/><circle cx="33.5" cy="29.5" r="0.8" fill-opacity="0.24"/><circle cx="1165.7" cy="23.6" r="0.5" fill-opacity="0.47"/><circle cx="551.6" cy="30.5" r="0.6" fill-opacity="0.60"/><circle cx="659.3" cy="26.4" r="0.5" fill-opacity="0.36"/><circle cx="208.1" cy="23.1" r="0.9" fill-opacity="0.60"/><circle cx="645.0" cy="0.3" r="0.5" fill-opacity="0.51"/><circle cx="472.8" cy="11.6" r="0.6" fill-opacity="0.50"/><circle cx="630.5" cy="10.5" r="0.8" fill-opacity="0.36"/><circle cx="442.9" cy="25.3" r="0.8" fill-opacity="0.58"/><circle cx="1063.8" cy="19.6" r="0.4" fill-opacity="0.39"/><circle cx="825.4" cy="3.8" r="0.8" fill-opacity="0.51"/><circle cx="760.0" cy="3.5" r="0.7" fill-opacity="0.35"/><circle cx="818.1" cy="29.7" r="0.9" fill-opacity="0.34"/><circle cx="637.1" cy="2.0" r="0.6" fill-opacity="0.48"/><circle cx="755.2" cy="35.1" r="0.7" fill-opacity="0.48"/><circle cx="933.5" cy="34.9" r="0.8" fill-opacity="0.32"/><circle cx="914.3" cy="16.2" r="0.9" fill-opacity="0.23"/><circle cx="1089.6" cy="25.2" r="0.5" fill-opacity="0.54"/><circle cx="613.9" cy="24.9" r="0.5" fill-opacity="0.55"/><circle cx="54.9" cy="29.1" r="0.9" fill-opacity="0.28"/><circle cx="58.9" cy="32.3" r="0.7" fill-opacity="0.24"/><circle cx="962.3" cy="18.6" r="0.4" fill-opacity="0.53"/><circle cx="860.0" cy="14.0" r="0.5" fill-opacity="0.36"/><circle cx="131.7" cy="31.1" r="0.5" fill-opacity="0.36"/><circle cx="200.8" cy="9.6" r="0.5" fill-opacity="0.54"/><circle cx="383.8" cy="32.5" r="0.4" fill-opacity="0.45"/><circle cx="304.7" cy="34.3" r="0.8" fill-opacity="0.57"/><circle cx="173.5" cy="4.3" r="0.9" fill-opacity="0.58"/><circle cx="846.8" cy="29.1" r="0.5" fill-opacity="0.28"/><circle cx="103.7" cy="24.7" r="0.4" fill-opacity="0.20"/><circle cx="901.4" cy="6.3" r="0.5" fill-opacity="0.44"/><circle cx="90.9" cy="13.1" r="0.5" fill-opacity="0.43"/><circle cx="462.3" cy="4.4" r="0.6" fill-opacity="0.27"/><circle cx="931.1" cy="31.1" r="0.8" fill-opacity="0.47"/><circle cx="250.5" cy="27.0" r="0.4" fill-opacity="0.52"/><circle cx="1135.1" cy="35.2" r="0.4" fill-opacity="0.48"/><circle cx="454.5" cy="8.0" r="0.9" fill-opacity="0.27"/><circle cx="92.3" cy="30.7" r="0.6" fill-opacity="0.56"/><circle cx="685.5" cy="3.1" r="0.9" fill-opacity="0.38"/><circle cx="1182.7" cy="16.6" r="0.9" fill-opacity="0.23"/><circle cx="1183.7" cy="12.1" r="0.9" fill-opacity="0.57"/><circle cx="328.9" cy="32.3" r="0.7" fill-opacity="0.50"/><circle cx="360.2" cy="16.7" r="0.6" fill-opacity="0.23"/><circle cx="807.5" cy="15.8" r="0.6" fill-opacity="0.53"/><circle cx="1176.1" cy="33.0" r="0.6" fill-opacity="0.40"/><circle cx="388.3" cy="2.0" r="0.5" fill-opacity="0.50"/><circle cx="76.6" cy="10.1" r="0.9" fill-opacity="0.16"/><circle cx="578.0" cy="31.0" r="0.4" fill-opacity="0.31"/><circle cx="528.2" cy="7.7" r="0.5" fill-opacity="0.37"/><circle cx="531.5" cy="3.1" r="0.5" fill-opacity="0.25"/><circle cx="188.7" cy="17.4" r="0.7" fill-opacity="0.37"/><circle cx="1200.0" cy="35.3" r="0.6" fill-opacity="0.42"/><circle cx="312.9" cy="26.8" r="0.6" fill-opacity="0.57"/><circle cx="612.5" cy="13.6" r="0.6" fill-opacity="0.51"/><circle cx="434.4" cy="9.6" r="0.5" fill-opacity="0.21"/><circle cx="214.3" cy="3.4" r="0.8" fill-opacity="0.49"/><circle cx="642.9" cy="30.5" r="0.9" fill-opacity="0.30"/><circle cx="388.1" cy="1.9" r="0.5" fill-opacity="0.32"/><circle cx="391.4" cy="20.8" r="0.8" fill-opacity="0.59"/><circle cx="460.4" cy="27.9" r="0.9" fill-opacity="0.53"/><circle cx="1092.5" cy="10.7" r="0.4" fill-opacity="0.44"/><circle cx="29.6" cy="33.0" r="0.7" fill-opacity="0.19"/><circle cx="747.8" cy="22.6" r="0.5" fill-opacity="0.36"/><circle cx="205.4" cy="22.7" r="0.7" fill-opacity="0.19"/><circle cx="941.2" cy="18.3" r="0.6" fill-opacity="0.44"/><circle cx="685.8" cy="6.2" r="0.5" fill-opacity="0.41"/><circle cx="475.3" cy="14.4" r="0.4" fill-opacity="0.33"/><circle cx="140.8" cy="2.6" r="0.9" fill-opacity="0.57"/><circle cx="266.0" cy="21.4" r="0.6" fill-opacity="0.33"/><circle cx="423.8" cy="5.1" r="0.7" fill-opacity="0.16"/><circle cx="580.5" cy="26.8" r="0.5" fill-opacity="0.34"/><circle cx="427.4" cy="33.6" r="0.9" fill-opacity="0.24"/><circle cx="555.2" cy="0.5" r="0.7" fill-opacity="0.18"/><circle cx="167.1" cy="18.3" r="0.6" fill-opacity="0.37"/><circle cx="940.0" cy="14.1" r="0.4" fill-opacity="0.37"/><circle cx="722.3" cy="5.2" r="0.8" fill-opacity="0.28"/><circle cx="760.4" cy="3.4" r="0.8" fill-opacity="0.25"/><circle cx="497.3" cy="2.6" r="0.9" fill-opacity="0.23"/><circle cx="740.4" cy="17.4" r="0.6" fill-opacity="0.44"/><circle cx="173.2" cy="7.9" r="0.6" fill-opacity="0.26"/><circle cx="33.5" cy="25.0" r="0.6" fill-opacity="0.51"/><circle cx="1035.6" cy="7.7" r="0.6" fill-opacity="0.46"/><circle cx="679.7" cy="18.2" r="0.6" fill-opacity="0.40"/><circle cx="283.1" cy="8.6" r="0.5" fill-opacity="0.26"/><circle cx="344.7" cy="16.8" r="0.5" fill-opacity="0.58"/><circle cx="177.2" cy="34.8" r="0.4" fill-opacity="0.34"/><circle cx="517.3" cy="6.5" r="0.5" fill-opacity="0.53"/><circle cx="581.6" cy="0.2" r="0.9" fill-opacity="0.29"/><circle cx="887.8" cy="16.8" r="0.6" fill-opacity="0.37"/><circle cx="970.8" cy="12.7" r="0.7" fill-opacity="0.50"/><circle cx="426.3" cy="26.6" r="0.7" fill-opacity="0.51"/><circle cx="985.3" cy="15.4" r="0.6" fill-opacity="0.47"/><circle cx="304.9" cy="17.9" r="0.4" fill-opacity="0.42"/><circle cx="1100.6" cy="26.1" r="0.9" fill-opacity="0.48"/><circle cx="836.3" cy="33.1" r="0.9" fill-opacity="0.39"/><circle cx="1139.9" cy="10.8" r="0.6" fill-opacity="0.18"/><circle cx="699.1" cy="8.0" r="0.7" fill-opacity="0.44"/><circle cx="2.5" cy="7.5" r="0.8" fill-opacity="0.37"/><circle cx="873.1" cy="12.5" r="0.8" fill-opacity="0.59"/><circle cx="111.2" cy="22.2" r="0.5" fill-opacity="0.38"/><circle cx="613.6" cy="35.6" r="0.8" fill-opacity="0.27"/><circle cx="1030.6" cy="17.0" r="0.5" fill-opacity="0.59"/><circle cx="45.1" cy="13.6" r="0.6" fill-opacity="0.42"/><circle cx="1087.7" cy="5.9" r="0.6" fill-opacity="0.41"/><circle cx="1081.8" cy="33.3" r="0.5" fill-opacity="0.18"/><circle cx="69.1" cy="4.7" r="0.4" fill-opacity="0.49"/><circle cx="355.8" cy="11.0" r="0.5" fill-opacity="0.51"/><circle cx="1182.6" cy="3.4" r="0.6" fill-opacity="0.48"/><circle cx="1158.2" cy="26.1" r="0.6" fill-opacity="0.29"/><circle cx="1154.1" cy="10.3" r="0.7" fill-opacity="0.32"/><circle cx="72.8" cy="13.9" r="0.9" fill-opacity="0.52"/><circle cx="149.5" cy="18.5" r="0.6" fill-opacity="0.31"/><circle cx="647.5" cy="29.2" r="0.4" fill-opacity="0.49"/><circle cx="644.9" cy="21.7" r="0.7" fill-opacity="0.22"/><circle cx="1101.9" cy="18.3" r="0.5" fill-opacity="0.51"/><circle cx="1135.4" cy="30.8" r="0.6" fill-opacity="0.60"/><circle cx="44.0" cy="8.6" r="0.6" fill-opacity="0.45"/><circle cx="62.8" cy="7.2" r="0.7" fill-opacity="0.48"/><circle cx="110.6" cy="3.3" r="0.7" fill-opacity="0.23"/><circle cx="1122.0" cy="20.7" r="0.5" fill-opacity="0.15"/><circle cx="81.7" cy="29.5" r="0.5" fill-opacity="0.38"/><circle cx="846.7" cy="6.8" r="0.5" fill-opacity="0.58"/><circle cx="166.2" cy="15.8" r="0.5" fill-opacity="0.60"/><circle cx="1160.5" cy="0.5" r="0.7" fill-opacity="0.44"/><circle cx="507.9" cy="20.7" r="0.5" fill-opacity="0.27"/><circle cx="629.9" cy="2.1" r="0.5" fill-opacity="0.60"/><circle cx="488.6" cy="2.8" r="0.5" fill-opacity="0.18"/><circle cx="1089.7" cy="18.9" r="0.9" fill-opacity="0.44"/><circle cx="1122.6" cy="12.1" r="0.7" fill-opacity="0.38"/><circle cx="290.3" cy="28.3" r="0.4" fill-opacity="0.25"/><circle cx="232.8" cy="15.1" r="0.9" fill-opacity="0.43"/><circle cx="267.5" cy="7.8" r="0.6" fill-opacity="0.52"/><circle cx="541.1" cy="9.1" r="0.9" fill-opacity="0.24"/><circle cx="131.3" cy="1.0" r="0.4" fill-opacity="0.24"/><circle cx="698.0" cy="1.5" r="0.6" fill-opacity="0.53"/><circle cx="822.7" cy="27.3" r="0.5" fill-opacity="0.46"/><circle cx="1075.1" cy="4.8" r="0.6" fill-opacity="0.15"/><circle cx="686.7" cy="13.7" r="0.5" fill-opacity="0.53"/><circle cx="1041.4" cy="0.6" r="0.4" fill-opacity="0.57"/><circle cx="222.0" cy="11.8" r="0.7" fill-opacity="0.31"/><circle cx="154.8" cy="31.5" r="0.6" fill-opacity="0.34"/><circle cx="72.0" cy="21.9" r="0.7" fill-opacity="0.20"/><circle cx="532.3" cy="7.9" r="0.6" fill-opacity="0.19"/><circle cx="151.7" cy="11.4" r="0.7" fill-opacity="0.18"/><circle cx="1165.5" cy="20.9" r="0.6" fill-opacity="0.39"/><circle cx="489.4" cy="4.0" r="0.6" fill-opacity="0.54"/><circle cx="1209.0" cy="29.4" r="0.6" fill-opacity="0.17"/><circle cx="18.5" cy="3.3" r="0.6" fill-opacity="0.45"/><circle cx="1186.6" cy="24.6" r="0.6" fill-opacity="0.45"/><circle cx="28.0" cy="33.7" r="0.6" fill-opacity="0.29"/><circle cx="904.3" cy="17.9" r="0.5" fill-opacity="0.39"/><circle cx="1112.4" cy="30.1" r="0.8" fill-opacity="0.43"/><circle cx="300.5" cy="33.1" r="0.7" fill-opacity="0.48"/><circle cx="952.9" cy="22.8" r="0.8" fill-opacity="0.52"/><circle cx="580.4" cy="2.2" r="0.6" fill-opacity="0.49"/><circle cx="1052.0" cy="32.2" r="0.8" fill-opacity="0.34"/><circle cx="700.2" cy="4.6" r="0.8" fill-opacity="0.52"/><circle cx="408.9" cy="28.8" r="0.9" fill-opacity="0.60"/><circle cx="309.7" cy="27.0" r="0.5" fill-opacity="0.51"/><circle cx="317.4" cy="35.8" r="0.7" fill-opacity="0.52"/><circle cx="1069.7" cy="4.7" r="0.7" fill-opacity="0.37"/><circle cx="539.5" cy="33.7" r="0.8" fill-opacity="0.46"/><circle cx="448.8" cy="13.2" r="0.6" fill-opacity="0.58"/><circle cx="82.6" cy="20.5" r="0.6" fill-opacity="0.25"/><circle cx="25.4" cy="32.2" r="0.6" fill-opacity="0.47"/><circle cx="402.8" cy="15.8" r="0.5" fill-opacity="0.20"/><circle cx="528.5" cy="13.7" r="0.7" fill-opacity="0.43"/><circle cx="1070.3" cy="7.0" r="0.8" fill-opacity="0.17"/><circle cx="779.1" cy="25.2" r="0.6" fill-opacity="0.53"/><circle cx="1181.4" cy="26.4" r="0.5" fill-opacity="0.48"/><circle cx="74.1" cy="27.1" r="0.5" fill-opacity="0.32"/><circle cx="294.8" cy="2.9" r="0.6" fill-opacity="0.30"/><circle cx="1148.3" cy="22.8" r="0.8" fill-opacity="0.56"/><circle cx="536.7" cy="2.9" r="0.7" fill-opacity="0.43"/><circle cx="599.4" cy="18.2" r="0.8" fill-opacity="0.27"/><circle cx="704.1" cy="25.6" r="0.9" fill-opacity="0.51"/><circle cx="381.8" cy="11.9" r="0.8" fill-opacity="0.47"/><circle cx="612.3" cy="31.3" r="0.6" fill-opacity="0.40"/><circle cx="865.1" cy="12.4" r="0.6" fill-opacity="0.31"/><circle cx="754.1" cy="3.7" r="0.7" fill-opacity="0.22"/><circle cx="462.0" cy="26.9" r="0.4" fill-opacity="0.32"/><circle cx="1185.3" cy="32.7" r="0.6" fill-opacity="0.40"/><circle cx="1193.2" cy="35.4" r="0.5" fill-opacity="0.18"/><circle cx="756.7" cy="31.7" r="0.6" fill-opacity="0.42"/><circle cx="1059.3" cy="30.5" r="0.6" fill-opacity="0.43"/><circle cx="102.6" cy="14.1" r="0.7" fill-opacity="0.43"/><circle cx="414.7" cy="3.3" r="0.7" fill-opacity="0.18"/><circle cx="726.5" cy="33.8" r="0.7" fill-opacity="0.43"/><circle cx="1103.3" cy="0.0" r="0.6" fill-opacity="0.39"/><circle cx="199.7" cy="5.7" r="0.9" fill-opacity="0.44"/><circle cx="827.6" cy="33.1" r="0.5" fill-opacity="0.51"/><circle cx="355.0" cy="26.3" r="0.4" fill-opacity="0.16"/><circle cx="436.2" cy="35.4" r="0.8" fill-opacity="0.58"/><circle cx="675.3" cy="25.7" r="0.5" fill-opacity="0.37"/><circle cx="754.8" cy="14.0" r="0.6" fill-opacity="0.53"/><circle cx="1109.9" cy="30.7" r="0.7" fill-opacity="0.19"/><circle cx="141.8" cy="18.3" r="0.6" fill-opacity="0.48"/><circle cx="250.0" cy="18.4" r="0.4" fill-opacity="0.51"/><circle cx="975.1" cy="29.9" r="0.9" fill-opacity="0.20"/><circle cx="418.4" cy="17.1" r="0.6" fill-opacity="0.39"/><circle cx="37.1" cy="0.3" r="0.6" fill-opacity="0.59"/><circle cx="1106.5" cy="4.9" r="0.6" fill-opacity="0.15"/><circle cx="296.6" cy="26.8" r="0.9" fill-opacity="0.44"/><circle cx="1167.8" cy="33.3" r="0.7" fill-opacity="0.19"/><circle cx="678.0" cy="11.9" r="0.4" fill-opacity="0.59"/><circle cx="923.0" cy="28.3" r="0.4" fill-opacity="0.34"/><circle cx="694.0" cy="33.5" r="0.4" fill-opacity="0.16"/><circle cx="541.8" cy="31.4" r="0.6" fill-opacity="0.37"/><circle cx="1131.2" cy="27.2" r="0.6" fill-opacity="0.49"/><circle cx="1154.4" cy="32.0" r="0.9" fill-opacity="0.57"/><circle cx="523.0" cy="30.5" r="0.4" fill-opacity="0.20"/><circle cx="775.0" cy="7.4" r="0.5" fill-opacity="0.51"/><circle cx="786.9" cy="32.8" r="0.5" fill-opacity="0.51"/><circle cx="1045.3" cy="19.8" r="0.8" fill-opacity="0.60"/><circle cx="1056.7" cy="19.1" r="0.5" fill-opacity="0.53"/><circle cx="1007.3" cy="5.7" r="0.4" fill-opacity="0.57"/><circle cx="904.4" cy="8.8" r="0.5" fill-opacity="0.53"/><circle cx="916.6" cy="5.9" r="0.5" fill-opacity="0.60"/><circle cx="453.3" cy="34.4" r="0.9" fill-opacity="0.56"/><circle cx="261.0" cy="30.0" r="0.4" fill-opacity="0.20"/><circle cx="848.7" cy="19.8" r="0.5" fill-opacity="0.35"/><circle cx="499.0" cy="8.4" r="0.5" fill-opacity="0.29"/><circle cx="1103.4" cy="1.2" r="0.4" fill-opacity="0.16"/><circle cx="876.2" cy="34.2" r="0.7" fill-opacity="0.33"/><circle cx="791.8" cy="32.4" r="0.9" fill-opacity="0.37"/><circle cx="970.9" cy="1.3" r="0.5" fill-opacity="0.18"/><circle cx="35.0" cy="5.8" r="0.7" fill-opacity="0.16"/><circle cx="457.5" cy="13.9" r="0.5" fill-opacity="0.54"/><circle cx="290.4" cy="26.7" r="0.7" fill-opacity="0.33"/><circle cx="520.8" cy="23.2" r="0.5" fill-opacity="0.36"/><circle cx="512.8" cy="16.5" r="0.9" fill-opacity="0.46"/><circle cx="487.1" cy="18.7" r="0.4" fill-opacity="0.46"/><circle cx="234.0" cy="5.0" r="0.6" fill-opacity="0.24"/><circle cx="1051.8" cy="21.8" r="0.9" fill-opacity="0.58"/><circle cx="846.5" cy="13.3" r="0.8" fill-opacity="0.38"/><circle cx="1153.5" cy="18.1" r="0.5" fill-opacity="0.54"/><circle cx="251.1" cy="19.5" r="0.6" fill-opacity="0.50"/><circle cx="33.6" cy="20.3" r="0.9" fill-opacity="0.27"/><circle cx="355.8" cy="32.0" r="0.6" fill-opacity="0.54"/><circle cx="609.3" cy="4.6" r="0.7" fill-opacity="0.36"/><circle cx="591.9" cy="1.0" r="0.9" fill-opacity="0.33"/><circle cx="407.5" cy="3.3" r="0.7" fill-opacity="0.23"/><circle cx="823.2" cy="18.6" r="0.8" fill-opacity="0.53"/><circle cx="1122.4" cy="18.1" r="0.6" fill-opacity="0.42"/><circle cx="58.8" cy="17.8" r="0.6" fill-opacity="0.53"/><circle cx="153.0" cy="26.5" r="0.7" fill-opacity="0.38"/><circle cx="137.0" cy="26.3" r="0.6" fill-opacity="0.47"/><circle cx="500.3" cy="0.2" r="0.4" fill-opacity="0.54"/><circle cx="661.6" cy="35.0" r="0.4" fill-opacity="0.28"/><circle cx="596.9" cy="19.8" r="0.5" fill-opacity="0.44"/><circle cx="715.6" cy="33.8" r="0.9" fill-opacity="0.16"/><circle cx="667.0" cy="22.6" r="0.6" fill-opacity="0.45"/><circle cx="1194.4" cy="12.4" r="0.8" fill-opacity="0.39"/><circle cx="1102.6" cy="30.8" r="0.8" fill-opacity="0.42"/><circle cx="618.9" cy="10.5" r="0.5" fill-opacity="0.18"/><circle cx="397.3" cy="11.3" r="0.6" fill-opacity="0.59"/><circle cx="968.7" cy="19.6" r="0.8" fill-opacity="0.31"/><circle cx="930.5" cy="27.1" r="0.9" fill-opacity="0.31"/><circle cx="901.9" cy="15.2" r="0.8" fill-opacity="0.56"/><circle cx="1078.4" cy="17.3" r="0.8" fill-opacity="0.18"/><circle cx="938.0" cy="3.5" r="0.6" fill-opacity="0.34"/><circle cx="121.6" cy="19.8" r="0.6" fill-opacity="0.22"/><circle cx="549.7" cy="27.4" r="0.7" fill-opacity="0.44"/><circle cx="782.9" cy="27.4" r="0.8" fill-opacity="0.33"/><circle cx="948.7" cy="3.1" r="0.4" fill-opacity="0.49"/><circle cx="1115.4" cy="31.7" r="0.5" fill-opacity="0.44"/><circle cx="633.2" cy="25.1" r="0.9" fill-opacity="0.31"/><circle cx="217.2" cy="21.9" r="0.6" fill-opacity="0.39"/><circle cx="619.4" cy="22.2" r="0.8" fill-opacity="0.47"/><circle cx="1002.0" cy="16.9" r="0.6" fill-opacity="0.20"/><circle cx="98.9" cy="16.3" r="0.5" fill-opacity="0.26"/><circle cx="1161.9" cy="10.4" r="0.9" fill-opacity="0.59"/><circle cx="608.6" cy="7.4" r="0.7" fill-opacity="0.26"/><circle cx="767.9" cy="13.0" r="0.7" fill-opacity="0.36"/><circle cx="995.4" cy="24.2" r="0.6" fill-opacity="0.41"/><circle cx="297.0" cy="33.7" r="0.5" fill-opacity="0.47"/><circle cx="691.5" cy="2.0" r="0.6" fill-opacity="0.30"/><circle cx="1151.5" cy="15.8" r="0.4" fill-opacity="0.53"/><circle cx="590.7" cy="14.0" r="0.6" fill-opacity="0.17"/><circle cx="314.3" cy="13.1" r="0.8" fill-opacity="0.24"/><circle cx="15.9" cy="31.6" r="0.4" fill-opacity="0.23"/><circle cx="627.4" cy="20.8" r="0.5" fill-opacity="0.48"/><circle cx="548.7" cy="7.7" r="0.5" fill-opacity="0.32"/><circle cx="1002.4" cy="32.8" r="0.5" fill-opacity="0.24"/><circle cx="1042.4" cy="10.9" r="0.4" fill-opacity="0.42"/><circle cx="158.1" cy="15.5" r="0.5" fill-opacity="0.59"/><circle cx="716.4" cy="17.4" r="0.5" fill-opacity="0.57"/><circle cx="35.1" cy="9.7" r="0.9" fill-opacity="0.37"/><circle cx="1052.9" cy="2.4" r="0.8" fill-opacity="0.54"/><circle cx="242.3" cy="1.1" r="0.6" fill-opacity="0.49"/><circle cx="500.4" cy="25.5" r="0.5" fill-opacity="0.31"/><circle cx="540.8" cy="0.5" r="0.6" fill-opacity="0.26"/><circle cx="656.9" cy="9.7" r="0.6" fill-opacity="0.58"/><circle cx="1110.1" cy="15.3" r="0.5" fill-opacity="0.35"/><circle cx="919.1" cy="23.7" r="0.6" fill-opacity="0.30"/><circle cx="560.3" cy="26.1" r="0.8" fill-opacity="0.27"/><circle cx="143.3" cy="19.2" r="0.6" fill-opacity="0.30"/><circle cx="472.4" cy="27.1" r="0.4" fill-opacity="0.36"/><circle cx="552.9" cy="4.8" r="0.9" fill-opacity="0.60"/><circle cx="378.1" cy="0.6" r="0.5" fill-opacity="0.18"/><circle cx="447.9" cy="34.3" r="0.5" fill-opacity="0.31"/><circle cx="1069.5" cy="5.9" r="0.6" fill-opacity="0.54"/><circle cx="890.0" cy="10.7" r="0.6" fill-opacity="0.40"/><circle cx="796.0" cy="17.7" r="0.6" fill-opacity="0.36"/></g><path d="M640 36 L700 0" stroke="#8fc4cf" stroke-opacity="0.3" stroke-width="1"/></svg>
  <div class="abs" style="left:552px;top:0;width:76px;height:34px;background:rgba(56,168,184,0.62)"></div>
  <svg class="abs" style="left:296.5px;top:0" width="11" height="5"><path d="M0 0H10.8V3.8H7.2V1.3H3.6V3.8H0Z" fill="#f2f6f8"/></svg>
  <svg class="abs" style="left:357px;top:0" width="17" height="5"><path d="M0.3 0.8H10" fill="none" stroke="#eef3f6" stroke-width="1.2"/><path d="M4.8 2H9.8V3.8H4.8Z" fill="#eef3f6"/><path d="M11.5 0L15.8 3.2" stroke="#eef3f6" stroke-width="1.3"/></svg>
  <svg class="abs" style="left:434px;top:0" width="12" height="5"><path d="M0.7 0V4.3H11.3V0" fill="none" stroke="#eef3f6" stroke-width="1.4"/><path d="M6 0H11V3H8Z" fill="#eef3f6"/></svg>
  <svg class="abs" style="left:507px;top:0" width="15" height="5"><path d="M1.2 3.8L6.5 -0.5L13.8 4.2" fill="none" stroke="#eef3f6" stroke-width="1.9"/></svg>
  <svg class="abs" style="left:582px;top:0" width="11" height="5"><path d="M1 3.8L5 -0.5L10 3.8" fill="none" stroke="#eef3f6" stroke-width="1.6"/></svg>
  <svg class="abs" style="left:1016px;top:2px" width="12" height="13" viewBox="0 0 12 13"><path d="M1 10.5H11L9.7 9V5.2A3.7 3.9 0 0 0 2.3 5.2V9Z" fill="none" stroke="#f3f0ea" stroke-width="1"/><path d="M4.6 11.3A1.4 1.4 0 0 0 7.4 11.3" fill="none" stroke="#f3f0ea" stroke-width="1"/></svg>
  <svg class="abs" style="left:1072px;top:2px" width="14" height="12" viewBox="0 0 14 12"><path d="M0.6 5.5L7 0.8L13.4 5.5V11.4H0.6Z" fill="none" stroke="#f0efe9" stroke-width="1"/><path d="M0.8 11.2L7 6.5L13.2 11.2M0.8 5.6L4.5 8.4M13.2 5.6L9.5 8.4" fill="none" stroke="#f0efe9" stroke-width="1"/></svg>
  <svg class="abs" style="left:1124px;top:2px" width="13" height="12" viewBox="0 0 13 12"><rect x="0.6" y="0.6" width="11.8" height="10.8" fill="none" stroke="#eef0f4" stroke-width="1"/><path d="M4 3V5M3 7L5 9M5 7L3 9" stroke="#cfe9f0" stroke-width="0.9"/></svg>
  <!-- logo -->
  <svg class="abs" style="left:28px;top:2px" width="14" height="14" viewBox="0 0 14 14">
    <path d="M0 13 L13 0.5 L13 13 Z" fill="#ee1c18"/><rect x="0.3" y="0.3" width="4.2" height="4.2" fill="#ee1c18"/><rect x="2" y="2.5" width="6.8" height="6.8" fill="#ee1c18"/><rect x="1.3" y="1.3" width="2" height="2" fill="#173744"/><rect x="4.6" y="5" width="3.4" height="3.4" fill="#173744"/>
  </svg>
  <div class="t" style="left:44.5px;top:-0.5px;font-size:16.5px;line-height:18px;color:#eef3f6;transform:scaleX(0.80);transform-origin:0 0">ACREL</div>
  <div class="t" style="left:97px;top:-0.5px;font-size:16px;letter-spacing:1px;line-height:18px;color:#e3ebef">安全用电管理平台</div>
  <div class="nav" style="left:291px">首页</div>
  <div class="nav" style="left:343px">实时监控</div>
  <div class="nav" style="left:419px">隐患管理</div>
  <div class="nav" style="left:493px">日常巡检</div>
  <div class="nav" style="left:568px">统计分析</div>
  <!-- right -->
  <div class="abs" style="left:1029px;top:-4px;width:24px;height:22px;border-radius:11px;padding-top:4px;background:#2fbdcc;color:#fff;font-size:9px;font-weight:bold;text-align:center;line-height:17px">44</div>
  <div class="abs" style="left:1086px;top:-1px;width:19px;height:19px;border-radius:50%;padding-top:1px;background:#ee6670;color:#fff;font-size:9px;font-weight:bold;text-align:center;line-height:18px">0</div>
  <div class="abs" style="left:1137px;top:-1px;width:19px;height:19px;border-radius:50%;padding-top:1px;background:#f2bd00;color:#fff;font-size:9px;font-weight:bold;text-align:center;line-height:18px">0</div>
  <div class="t" style="left:1172px;top:1px;font-size:12px;line-height:16px;color:#fff;font-weight:bold">展示用户</div>
</div>

<div id="side">
  <svg class="abs" style="left:7px;top:5px" width="16" height="16" viewBox="0 0 16 16"><path d="M8.1 1.6 A6.6 6.6 0 1 1 1.5 8.2" fill="none" stroke="#d9e3ea" stroke-width="1.1"/><path d="M7.3 0.9 V7.4 H0.8 A6.5 6.5 0 0 1 7.3 0.9 Z" fill="rgba(220,230,236,0.35)" stroke="#e2e8ec" stroke-width="1.1"/></svg>
  <div class="sitem" style="top:7px">隐患统计</div>
  <svg class="abs" style="left:7px;top:31px" width="16" height="16" viewBox="0 0 16 16"><circle cx="8.1" cy="8" r="6.6" fill="none" stroke="#d9e3ea" stroke-width="1.1"/><path d="M8.1 4.6 V11.4 M4.7 8 H11.5" fill="none" stroke="#d9e3ea" stroke-width="1.1"/></svg>
  <div class="sitem" style="top:33px">系统体检</div>
  <svg class="abs" style="left:9px;top:59px" width="14" height="13" viewBox="0 0 14 13"><rect x="0" y="6.2" width="3.4" height="5.8" fill="#dce5eb"/><rect x="4.6" y="0" width="4" height="12" fill="#dce5eb"/><rect x="9.5" y="2.8" width="3.6" height="9.2" fill="#dce5eb"/></svg>
  <div class="sitem" style="top:59px">能耗统计</div>
  <svg class="abs" style="left:9px;top:84px" width="14" height="14" viewBox="0 0 14 14"><rect x="0.8" y="0.8" width="11.6" height="12.2" fill="rgba(210,222,230,0.25)" stroke="#dce5eb" stroke-width="1.6"/><path d="M3.5 4H10.5M3.5 6.2H10.5M3.5 8.4H10.5M3.5 10.6H10.5" stroke="#dce5eb" stroke-width="1"/><path d="M3 3V11.5" stroke="#8fb0c8" stroke-width="0.8"/></svg>
  <div class="sitem" style="top:85px">能耗报表</div>
  <svg class="abs" style="left:8px;top:110px" width="15" height="15" viewBox="0 0 15 15"><circle cx="5.8" cy="5.8" r="4.3" fill="none" stroke="#e5ebef" stroke-width="2.3"/><path d="M9 9 L13 13" stroke="#e5ebef" stroke-width="2.5" stroke-linecap="round"/></svg>
  <div class="sitem" style="top:111px">参数查询</div>
</div>
<div id="gap"></div>

<!-- filter card -->
<div class="abs" style="left:219px;top:20px;width:1000px;height:98px;border:1px solid #e9e9e9;border-bottom:2px solid #eeeeee;background:#fff"></div>
<div class="t" style="left:242px;top:44px;font-size:11px;line-height:14px;color:#333">周期<span style="font-family:'Liberation Sans';font-size:12px;font-weight:bold;margin-left:1px">:</span></div>
<div class="abs" style="left:279px;top:38px;width:35px;height:22px;background:#dfe4eb;color:#555;font-size:9.5px;line-height:24px;text-align:center;letter-spacing:-0.3px">周报</div>
<div class="abs" style="left:326px;top:38px;width:35px;height:22px;background:#dfe4eb;color:#555;font-size:9.5px;line-height:24px;text-align:center;letter-spacing:-0.3px">月报</div>
<div class="abs" style="left:231px;top:68px;width:980px;height:1px;background:repeating-linear-gradient(90deg,#d6d6d6 0 2px,transparent 2px 4px)"></div>
<div class="t" style="left:242px;top:86px;font-size:11px;line-height:14px;color:#555">创建时间</div>
<div class="abs" style="left:293px;top:80px;width:81px;height:25px;border:1px solid #cfd8e6;font-family:'Liberation Serif',serif;font-size:11px;letter-spacing:0px;line-height:25px;text-align:center;color:#555">2018-02-01</div>
<div class="t" style="left:382px;top:86px;font-size:11px;line-height:14px;color:#555">至</div>
<div class="abs" style="left:402px;top:80px;width:80px;height:25px;border:1px solid #cfd8e6;font-family:'Liberation Serif',serif;font-size:11px;letter-spacing:0px;line-height:25px;text-align:center;color:#555">2018-02-24</div>
<div class="t" style="left:573px;top:85px;font-size:11px;line-height:14px;color:#555">项目</div>
<div class="abs" style="left:599px;top:80px;width:150px;height:23px;border:1px solid #a9a9a9;border-radius:2px;background:#fff"></div><div class="abs" style="left:603px;top:81px;width:132px;height:21px;font-size:10px;letter-spacing:0.6px;line-height:21px;color:#222;overflow:hidden;white-space:nowrap">卓顺塑模有限公司智慧用电项目</div>
<div class="t" style="left:739px;top:86px;font-size:8px;line-height:10px;color:#222">▼</div>
<div class="abs" style="left:893px;top:80px;width:55px;height:25px;background:#26a3a9;border:1px solid #1d8c90;color:#fff;font-size:11px;line-height:23px;padding-left:9px;padding-top:1px">查询</div>
<svg class="abs" style="left:929px;top:88px" width="11" height="11" viewBox="0 0 11 11"><circle cx="4.6" cy="4.6" r="3.3" fill="none" stroke="#fff" stroke-width="1.8"/><path d="M7 7 L10 10" stroke="#fff" stroke-width="2" stroke-linecap="round"/></svg>
<div class="abs" style="left:954px;top:80px;width:55px;height:25px;background:#3a98dc;color:#fff;font-size:11px;line-height:25px;padding-left:9px;padding-top:1px">打印</div>
<svg class="abs" style="left:989px;top:87px" width="12" height="11" viewBox="0 0 12 11"><path d="M3 0.5H8.5L9.5 1.5V4H3Z" fill="#fff"/><rect x="0.5" y="4" width="11" height="4.5" rx="1.5" fill="#fff"/><rect x="3" y="7" width="6" height="3.5" fill="#fff" stroke="#3a98dc" stroke-width="1"/></svg>

<!-- report title -->
<div class="t" style="left:671px;top:137px;font-size:14px;line-height:18px;color:#4a4a4a;letter-spacing:0px;-webkit-text-stroke:0.4px #4a4a4a">安全用电分析报告</div>

<!-- overview box -->
<div class="abs" style="left:305px;top:176px;width:845px;height:100px;background:#f4f7fc;border-left:4px solid #8cb3e6"></div>
<div class="t" style="left:321px;top:193px;font-size:13px;line-height:17px;color:#333">总体概况</div>
<div class="t" id="ov" style="left:321px;top:224px;font-size:10px;letter-spacing:-0.16px;line-height:13.5px;color:#222">
<b>项目名称：</b><span style="margin-left:2px"></span>卓顺塑模有限公司智慧用电项目<br>
<b>日期范围：</b><span style="margin-left:2px"></span><span class="dg">2018-02-01</span>&nbsp;&nbsp;至&nbsp;&nbsp;<span class="dg">2018-02-24</span><br>
<b>总体概况：</b><span style="margin-left:2px"></span>卓顺塑模有限公司智慧用电项目在<span class="dg">2018-02-01</span>至<span class="dg">2018-02-24</span>期间，所检测的1台设备中，目前1台在线，0台报警，0台故障，0台通讯中断。</div>

<!-- paragraph -->
<div class="t" id="para" style="left:305px;top:297px;font-family:'Liberation Serif',serif;font-size:11px;letter-spacing:0.24px;line-height:14px;color:#222;font-weight:bold"><span id="p1">在统计时间段中，报警总数合计0次，其中漏电报警0次，过压报警0次，欠压报警0次，过流报警0次，超温报警0次，烟感报警0次，故障电弧报警0次，短路报警0次，断线</span><br>报警0次，详情如下表。</div>
<div class="t" id="note" style="left:305px;top:330px;font-size:11px;letter-spacing:0.2px;line-height:14px;color:#e63a46;font-weight:bold">注：设备颜色是红色表示当前该设备正处于报警状态，绿色表示正常，黑色表示故障，灰色表示通信中断</div>

<!-- table -->
<div class="abs" style="left:305px;top:357px;width:844px;height:30px;background:#89b1e3;border-bottom:2px solid #5a6470"></div>
<div class="abs" style="left:305px;top:387px;width:844px;height:41px;background:#f9fafc;border-bottom:1px solid #e6e9ee"></div>
<div class="t" style="left:305px;top:364px;width:73px;text-align:center;font-size:11px;line-height:14px;color:#fff;font-weight:bold">设备</div>
<div class="t" style="left:378px;top:364px;width:67px;text-align:center;font-size:11px;line-height:14px;color:#fff;font-weight:bold">表地址</div>
<div class="t" style="left:445px;top:364px;width:56px;text-align:center;font-size:11px;line-height:14px;color:#fff;font-weight:bold">区域</div>
<div class="t" style="left:501px;top:364px;width:57px;text-align:center;font-size:11px;line-height:14px;color:#fff;font-weight:bold">位置</div>
<div class="t" style="left:558px;top:364px;width:56px;text-align:center;font-size:11px;line-height:14px;color:#fff;font-weight:bold">漏电</div>
<div class="t" style="left:614px;top:364px;width:55px;text-align:center;font-size:11px;line-height:14px;color:#fff;font-weight:bold">过压</div>
<div class="t" style="left:669px;top:364px;width:57px;text-align:center;font-size:11px;line-height:14px;color:#fff;font-weight:bold">欠压</div>
<div class="t" style="left:726px;top:364px;width:57px;text-align:center;font-size:11px;line-height:14px;color:#fff;font-weight:bold">过流</div>
<div class="t" style="left:783px;top:364px;width:56px;text-align:center;font-size:11px;line-height:14px;color:#fff;font-weight:bold">超温</div>
<div class="t" style="left:839px;top:364px;width:57px;text-align:center;font-size:11px;line-height:14px;color:#fff;font-weight:bold">烟感</div>
<div class="t" style="left:896px;top:364px;width:82px;text-align:center;font-size:11px;line-height:14px;color:#fff;font-weight:bold">故障电弧</div>
<div class="t" style="left:978px;top:364px;width:57px;text-align:center;font-size:11px;line-height:14px;color:#fff;font-weight:bold">短路</div>
<div class="t" style="left:1035px;top:364px;width:57px;text-align:center;font-size:11px;line-height:14px;color:#fff;font-weight:bold">断线</div>
<div class="t" style="left:1092px;top:364px;width:57px;text-align:center;font-size:11px;line-height:14px;color:#fff;font-weight:bold">合计</div>
<div class="t" style="left:313px;top:393px;font-size:9.8px;line-height:14px;color:#3a9a3a;white-space:nowrap;letter-spacing:-0.2px">87035738081</div>
<div class="t" style="left:386px;top:393px;font-size:9.8px;line-height:14px;color:#333;white-space:nowrap">1</div>
<div class="t" style="left:453px;top:393px;font-size:9.8px;line-height:14px;color:#333;white-space:normal">1楼配电<br>房</div>
<div class="t" style="left:509px;top:393px;font-size:9.8px;line-height:14px;color:#333;white-space:nowrap">3号箱</div>
<div class="t" style="left:566px;top:393px;font-size:9.8px;line-height:14px;color:#333;white-space:nowrap">0</div>
<div class="t" style="left:622px;top:393px;font-size:9.8px;line-height:14px;color:#333;white-space:nowrap">0</div>
<div class="t" style="left:677px;top:393px;font-size:9.8px;line-height:14px;color:#333;white-space:nowrap">0</div>
<div class="t" style="left:734px;top:393px;font-size:9.8px;line-height:14px;color:#333;white-space:nowrap">0</div>
<div class="t" style="left:791px;top:393px;font-size:9.8px;line-height:14px;color:#333;white-space:nowrap">0</div>
<div class="t" style="left:847px;top:393px;font-size:9.8px;line-height:14px;color:#333;white-space:nowrap">0</div>
<div class="t" style="left:904px;top:393px;font-size:9.8px;line-height:14px;color:#333;white-space:nowrap">0</div>
<div class="t" style="left:986px;top:393px;font-size:9.8px;line-height:14px;color:#333;white-space:nowrap">0</div>
<div class="t" style="left:1043px;top:393px;font-size:9.8px;line-height:14px;color:#333;white-space:nowrap">0</div>
<div class="t" style="left:1100px;top:393px;font-size:9.8px;line-height:14px;color:#333;white-space:nowrap">0</div>


<!-- health check -->
<div class="abs" style="left:305px;top:451px;width:845px;height:220px;background:#f4f7fc;border-left:4px solid #8cb3e6"></div>
<div class="t" style="left:321px;top:460px;font-size:13px;line-height:17px;color:#333">设备体检</div>
<div class="abs" style="left:348px;top:491px;width:60px;height:60px;border-radius:50%;background:#2fc0cf"></div>
<div class="t" style="left:347px;top:512px;width:61px;text-align:center;font-family:'Liberation Serif',serif;font-style:italic;font-size:14px;line-height:18px;color:#fff">100分</div>
<div class="t" id="healthy" style="left:459px;top:511px;font-size:17px;letter-spacing:0.6px;line-height:22px;color:#333">系统很健康，请您继续保持！</div>
<div class="abs" style="left:309px;top:566px;width:828px;height:1px;background:#d3d6da"></div>
<div class="t" id="chk" style="left:346px;top:581px;font-size:10px;letter-spacing:0.35px;line-height:14px;color:#222">共检查了7项，以下1项有隐患</div>
<div class="abs" style="left:309px;top:611px;width:828px;height:1px;background:#d3d6da"></div>
<svg class="abs" style="left:366px;top:626px" width="25" height="35" viewBox="0 0 25 35"><path d="M18.5 1.2 L1.8 17.6 Q1.2 18.3 2.2 18.3 H10.6 L6 34.2 L23 15.7 Q23.5 15 22.6 15 H13.4 Z" fill="#31bfcf"/></svg>
<svg class="abs" style="left:498px;top:626px" width="38" height="38" viewBox="0 0 38 38"><circle cx="18.5" cy="18" r="17.2" fill="none" stroke="#31bfcf" stroke-width="1.6"/><path d="M13.2 13 L18.5 27 L23.8 13" fill="none" stroke="#31bfcf" stroke-width="2.2" stroke-linejoin="round"/></svg>
<svg class="abs" style="left:636px;top:626px" width="38" height="38" viewBox="0 0 38 38"><circle cx="18.8" cy="18" r="17.2" fill="none" stroke="#31bfcf" stroke-width="1.6"/><path d="M13 26 L18.8 10.3 L24.6 26 M15 21 H22.6" fill="none" stroke="#31bfcf" stroke-width="2.2" stroke-linejoin="round"/></svg>
<svg class="abs" style="left:780px;top:626px" width="24" height="36" viewBox="0 0 24 36"><path d="M7.2 5 a4 4 0 0 1 8 0 V22.5 a6.8 6.8 0 1 1 -8 0 Z" fill="none" stroke="#31bfcf" stroke-width="1.6"/><rect x="9.8" y="7.5" width="2.8" height="18" fill="#31bfcf"/><circle cx="11.2" cy="28.2" r="4.6" fill="#31bfcf"/><path d="M17.4 2.5H22M17.4 5.5H21M17.4 8.5H22M17.4 11.5H21M17.4 14.5H22M17.4 17.5H21" stroke="#31bfcf" stroke-width="1"/></svg>
<svg class="abs" style="left:912px;top:626px" width="38" height="38" viewBox="0 0 38 38"><circle cx="18.5" cy="18" r="17.2" fill="none" stroke="#31bfcf" stroke-width="1.6"/><path d="M21.5 11 L15.2 17.2 L22 21.5 L17 26" fill="none" stroke="#31bfcf" stroke-width="2.8" stroke-linecap="round" stroke-linejoin="round"/></svg>
<svg class="abs" style="left:1050px;top:626px" width="38" height="38" viewBox="0 0 38 38"><circle cx="19.2" cy="18" r="17.2" fill="none" stroke="#31bfcf" stroke-width="1.6"/><path d="M16.2 7.5 H22 L19.6 14.5 H23.5 L19.8 22.5 H22 L17.8 29 L17.6 22.5 H15.8 L17.8 16.5 H14 Z" fill="#31bfcf"/></svg>




</body></html>
